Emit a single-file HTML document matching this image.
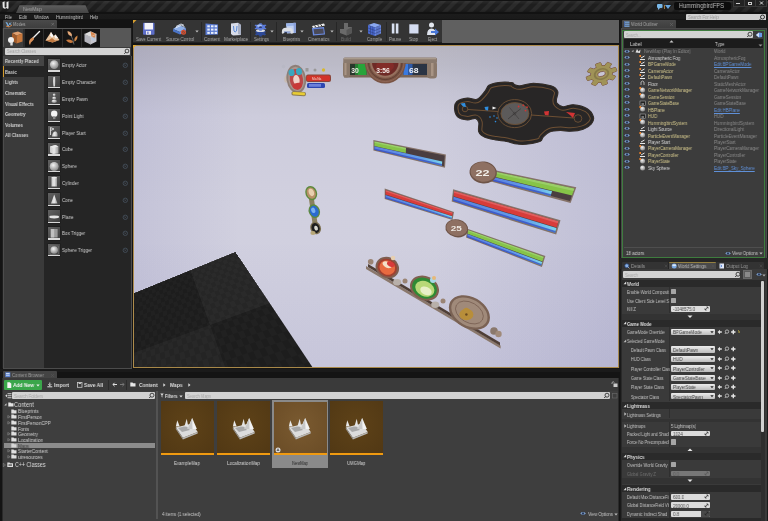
<!DOCTYPE html>
<html><head><meta charset="utf-8"><style>
*{margin:0;padding:0;box-sizing:border-box}
html,body{width:768px;height:521px;overflow:hidden;background:#141414;font-family:"Liberation Sans",sans-serif;color:#c8c8c8}
.a{position:absolute}
.t{position:absolute;white-space:nowrap;line-height:8px;height:8px;will-change:transform}
svg{position:absolute;overflow:visible}
</style></head><body>
<div class="a" style="left:0px;top:0px;width:768px;height:13px;background:linear-gradient(rgba(255,255,255,0.07),rgba(255,255,255,0) 35%,rgba(0,0,0,0) 70%,rgba(0,0,0,0.25)),repeating-linear-gradient(135deg,#1e1e1e 0 3.6px,#2b2b2b 4.8px 7.6px,#1e1e1e 8.8px)"></div>
<div class="a" style="left:0px;top:0px;width:768px;height:1px;background:#121212"></div>
<div class="a" style="left:0px;top:12px;width:768px;height:1.5px;background:#121212"></div>
<svg style="left:0;top:0" width="20" height="13"><path d="M2.5 2.2 L4.6 1.2 L4.6 7 Q5.5 8 6.5 7 L6.5 2.2 L8.5 1.3 L8.5 8.5 L7.3 8.8 L6.6 8 Q4 9.5 2.8 7.5 Z" fill="#e8e8e8"/></svg>
<svg style="left:0;top:0" width="100" height="13"><defs><linearGradient id="tabg" x1="0" y1="0" x2="0" y2="1"><stop offset="0" stop-color="#5e5e5e"/><stop offset="1" stop-color="#444"/></linearGradient></defs><polygon points="16,13 19.5,5.2 85.5,5.2 89,13" fill="url(#tabg)"/></svg>
<div class="t" style="left:22.5px;top:5px;font-size:5.5px;color:#a4a4a4;transform:scaleX(0.852);transform-origin:0 50%;">NewMap</div>
<svg style="left:650px;top:0" width="30" height="12"><rect x="7" y="4" width="5.5" height="4" rx="1" fill="#7ab8e8"/><path d="M8 8 L8 10 L10 8Z" fill="#7ab8e8"/><path d="M15 5 L21 5 L18 9Z" fill="#6aa8e0"/><rect x="14" y="5" width="1" height="4" fill="#a07a40"/></svg>
<div class="a" style="left:674px;top:2px;width:57px;height:7.5px;background:#0c0c0c;border-radius:2px"></div>
<div class="t" style="left:679px;top:2px;font-size:6.5px;color:#bdbdbd;transform:scaleX(0.877);transform-origin:0 50%;">HummingbirdFPS</div>
<div class="a" style="left:733px;top:0px;width:34px;height:6.5px;background:#222;border:1px solid #3a3a3a;border-top:none"></div>
<div class="a" style="left:744px;top:0px;width:1px;height:6.5px;background:#3a3a3a"></div>
<div class="a" style="left:755px;top:0px;width:1px;height:6.5px;background:#3a3a3a"></div>
<div class="a" style="left:736px;top:3px;width:4px;height:1px;background:#ccc"></div>
<div class="a" style="left:748px;top:1.5px;width:4px;height:3px;border:1px solid #ccc;border-top-width:1.5px"></div>
<svg style="left:756px;top:0" width="11" height="7"><path d="M4 1.5 L7 4.5 M7 1.5 L4 4.5" stroke="#ddd" stroke-width="1"/></svg>
<div class="a" style="left:0px;top:13.5px;width:768px;height:6.5px;background:linear-gradient(#1c1c1c,#1a1a1a 80%,#101010)"></div>
<div class="t" style="left:5px;top:12.8px;font-size:5.5px;color:#c4c4c4;transform:scaleX(0.790);transform-origin:0 50%;">File</div>
<div class="t" style="left:19px;top:12.8px;font-size:5.5px;color:#c4c4c4;transform:scaleX(0.844);transform-origin:0 50%;">Edit</div>
<div class="t" style="left:34px;top:12.8px;font-size:5.5px;color:#c4c4c4;transform:scaleX(0.767);transform-origin:0 50%;">Window</div>
<div class="t" style="left:56px;top:12.8px;font-size:5.5px;color:#c4c4c4;transform:scaleX(0.826);transform-origin:0 50%;">Hummingbird</div>
<div class="t" style="left:90px;top:12.8px;font-size:5.5px;color:#c4c4c4;transform:scaleX(0.707);transform-origin:0 50%;">Help</div>
<div class="a" style="left:686px;top:14px;width:80px;height:6.5px;background:#d0d0d0;border-radius:1px"></div>
<div class="t" style="left:687.5px;top:13.3px;font-size:5.2px;color:#9a9a9a;transform:scaleX(0.806);transform-origin:0 50%;">Search For Help</div>
<svg style="left:758px;top:14px" width="8" height="7"><circle cx="4.5" cy="3" r="2" stroke="#222" stroke-width="0.9" fill="none"/><path d="M3 4.5 L1.5 6" stroke="#222" stroke-width="1"/></svg>
<div class="a" style="left:3px;top:20px;width:54px;height:8px;background:linear-gradient(#4a4a4a,#3e3e3e);border-radius:1px 1px 0 0"></div>
<svg style="left:5px;top:21px" width="8" height="7"><path d="M1 1 L3 5 L6 1.5 M2 1.5 L3.5 6 M4 2 L6.5 4" stroke="#7ab0e0" stroke-width="0.9" fill="none"/><path d="M1 5 L4 6 L7 4" stroke="#d08040" stroke-width="1" fill="none"/></svg>
<div class="t" style="left:12.5px;top:20.2px;font-size:5.5px;color:#a8a8a8;transform:scaleX(0.745);transform-origin:0 50%;">Modes</div>
<svg style="left:50px;top:21px" width="6" height="6"><path d="M1.5 2 L4 4.5 M4 2 L1.5 4.5" stroke="#777" stroke-width="0.6"/></svg>
<div class="a" style="left:2px;top:28px;width:130px;height:340px;background:#3a3a3a;border-left:1px solid #1e1e1e;border-right:1px solid #1e1e1e;border-bottom:1px solid #1e1e1e"></div>
<div class="a" style="left:3px;top:28px;width:128px;height:19px;background:#575757"></div>
<div class="a" style="left:4px;top:29px;width:19px;height:17.5px;background:#3c3c3c"></div>
<div class="a" style="left:3.5px;top:28.5px;width:96px;height:18.5px;background:#2c2c2c"></div>
<div class="a" style="left:4px;top:29px;width:19px;height:17.5px;background:#3c3c3c"></div>
<div class="a" style="left:24.5px;top:29px;width:18px;height:17.5px;background:#141414"></div>
<div class="a" style="left:43.5px;top:29px;width:18px;height:17.5px;background:#141414"></div>
<div class="a" style="left:62.5px;top:29px;width:18px;height:17.5px;background:#141414"></div>
<div class="a" style="left:81.5px;top:29px;width:18px;height:17.5px;background:#141414"></div>
<svg style="left:4px;top:29px" width="20" height="18"><polygon points="8,4 14,2.5 18.5,4.5 12.5,6.5" fill="#e0a070"/><polygon points="8,4 12.5,6.5 12.5,14.5 8,12" fill="#a05a2a"/><polygon points="12.5,6.5 18.5,4.5 18.5,12.5 12.5,14.5" fill="#c8783c"/><circle cx="7" cy="11" r="3" fill="#f0f0f0"/><rect x="6.3" y="13" width="2.4" height="3.5" fill="#ddd"/></svg>
<svg style="left:24px;top:29px" width="19" height="18"><path d="M15.5 2.5 L8.5 9.5" stroke="#f4f4f4" stroke-width="1.4" stroke-linecap="round"/><path d="M9.2 8.3 Q5.5 9.5 5 13 Q4.8 15 6 16 Q6.5 13 8.5 12 Q10.5 10.5 10 9Z" fill="#d8905a"/></svg>
<svg style="left:43px;top:29px" width="19" height="18"><polygon points="2.5,11.5 8,3 10.5,7 12.5,5.5 16.5,11 9.5,13.5" fill="#e8c4a0"/><polygon points="2.5,11.5 9.5,13.5 16.5,11 12,11.5 9,9 6,11" fill="#c07840"/><polygon points="8,3 10.5,7 9,8.5 7,6.5" fill="#fafafa"/><polygon points="12.5,5.5 15,9 12.5,9.5 11.5,7.5" fill="#f4f4f4"/></svg>
<svg style="left:62px;top:29px" width="19" height="18"><path d="M5.5 2 Q10.5 3 10 7.5 Q5.5 6.5 5.5 2Z" fill="#e4a878"/><path d="M15.5 6.5 Q15.5 11.5 12.5 12.5 Q11.5 8.5 15.5 6.5Z" fill="#d08848"/><path d="M4 11 Q8.5 9.5 11.5 13 Q7 15.5 4 11Z" fill="#c87a40"/><path d="M9 6.5 Q11 10 12 15.5" stroke="#7a7a7a" stroke-width="0.8" fill="none"/></svg>
<svg style="left:81px;top:29px" width="19" height="18"><polygon points="3.5,5 9.5,2.2 15.5,5 9.5,8" fill="#dcdcdc"/><polygon points="3.5,5 9.5,8 9.5,15.5 3.5,12.5" fill="#b4b4bc"/><polygon points="9.5,8 15.5,5 15.5,12.5 9.5,15.5" fill="#c8c8d0"/><polygon points="9.5,2.5 14.5,4.8 14,9.5 10.5,7.5" fill="#d88850"/><polygon points="10,9 14,8 13.5,12 11,11" fill="#a8c8e8" opacity="0.6"/><path d="M3.5 5 L9.5 8 L15.5 5 M9.5 8 L9.5 15.5" stroke="#f0f0f0" stroke-width="0.4" fill="none"/></svg>
<div class="a" style="left:5px;top:48px;width:125px;height:6.5px;background:#d4d4d4;border-radius:1px"></div>
<div class="t" style="left:6.7px;top:47.4px;font-size:5.3px;color:#a4a4a4;transform:scaleX(0.781);transform-origin:0 50%;">Search Classes</div>
<svg style="left:123px;top:48px" width="7" height="7"><circle cx="4" cy="3" r="1.9" stroke="#222" stroke-width="0.8" fill="none"/><path d="M2.7 4.3 L1.3 5.8" stroke="#222" stroke-width="0.9"/></svg>
<div class="a" style="left:2.5px;top:55.5px;width:129px;height:313px;background:#3a3a3a;border:0.8px solid #4c4c4c"></div>
<div class="a" style="left:3.5px;top:55.8px;width:40.5px;height:10.6px;background:#454545"></div>
<div class="t" style="left:5.2px;top:57.199999999999996px;font-size:5.3px;color:#cfcfcf;transform:scaleX(0.83);transform-origin:0 50%;font-weight:bold">Recently Placed</div>
<div class="a" style="left:3.5px;top:66.39999999999999px;width:40.5px;height:10.4px;background:#252525"></div>
<div class="a" style="left:3px;top:66.39999999999999px;width:1.3px;height:10.4px;background:#d49a2a"></div>
<div class="t" style="left:5.2px;top:67.8px;font-size:5.3px;color:#cfcfcf;transform:scaleX(0.83);transform-origin:0 50%;font-weight:bold">Basic</div>
<div class="t" style="left:5.2px;top:78.4px;font-size:5.3px;color:#cfcfcf;transform:scaleX(0.83);transform-origin:0 50%;font-weight:bold">Lights</div>
<div class="t" style="left:5.2px;top:89.0px;font-size:5.3px;color:#cfcfcf;transform:scaleX(0.83);transform-origin:0 50%;font-weight:bold">Cinematic</div>
<div class="t" style="left:5.2px;top:99.6px;font-size:5.3px;color:#cfcfcf;transform:scaleX(0.83);transform-origin:0 50%;font-weight:bold">Visual Effects</div>
<div class="t" style="left:5.2px;top:110.2px;font-size:5.3px;color:#cfcfcf;transform:scaleX(0.83);transform-origin:0 50%;font-weight:bold">Geometry</div>
<div class="t" style="left:5.2px;top:120.8px;font-size:5.3px;color:#cfcfcf;transform:scaleX(0.83);transform-origin:0 50%;font-weight:bold">Volumes</div>
<div class="t" style="left:5.2px;top:131.4px;font-size:5.3px;color:#cfcfcf;transform:scaleX(0.83);transform-origin:0 50%;font-weight:bold">All Classes</div>
<div class="a" style="left:44.3px;top:56.3px;width:86.5px;height:311.5px;background:#252525"></div>
<svg style="left:0;top:0" width="1" height="1"><defs><radialGradient id="shs" cx="0.4" cy="0.35" r="0.65"><stop offset="0" stop-color="#f4f4f4"/><stop offset="1" stop-color="#8a8a8a"/></radialGradient><linearGradient id="shl" x1="0" x2="1"><stop offset="0" stop-color="#c8c8c8"/><stop offset="0.5" stop-color="#e8e8e8"/><stop offset="1" stop-color="#9a9a9a"/></linearGradient></defs></svg>
<div class="a" style="left:47.5px;top:58.8px;width:12.5px;height:12.8px;background:linear-gradient(135deg,#626262,#3c3c3c);box-shadow:0 0 0 0.5px #1a1a1a"></div>
<div class="a" style="left:47.5px;top:70.39999999999999px;width:12.5px;height:1.2px;background:#d8d8d8"></div>
<svg style="left:47.5px;top:58.8px" width="13" height="12"><circle cx="6.2" cy="5.6" r="4.3" fill="url(#shs)"/></svg>
<div class="t" style="left:62.2px;top:61.3px;font-size:5.3px;color:#cdcdcd;transform:scaleX(0.86);transform-origin:0 50%;">Empty Actor</div>
<svg style="left:122px;top:62.4px" width="7" height="7"><circle cx="3.3" cy="3.3" r="2.2" stroke="#46525e" stroke-width="0.8" fill="none"/><path d="M2.4 2.4 L4.2 4.2 M4.2 2.4 L2.4 4.2" stroke="#46525e" stroke-width="0.5"/></svg>
<div class="a" style="left:47.5px;top:75.6px;width:12.5px;height:12.8px;background:linear-gradient(135deg,#626262,#3c3c3c);box-shadow:0 0 0 0.5px #1a1a1a"></div>
<div class="a" style="left:47.5px;top:87.19999999999999px;width:12.5px;height:1.2px;background:#d8d8d8"></div>
<svg style="left:47.5px;top:75.6px" width="13" height="12"><path d="M5.3 1 Q6.2 0.3 7.1 1 L7.4 5 L7 10.5 L5.4 10.5 L5 5Z" fill="url(#shl)"/></svg>
<div class="t" style="left:62.2px;top:78.1px;font-size:5.3px;color:#cdcdcd;transform:scaleX(0.86);transform-origin:0 50%;">Empty Character</div>
<svg style="left:122px;top:79.19999999999999px" width="7" height="7"><circle cx="3.3" cy="3.3" r="2.2" stroke="#46525e" stroke-width="0.8" fill="none"/><path d="M2.4 2.4 L4.2 4.2 M4.2 2.4 L2.4 4.2" stroke="#46525e" stroke-width="0.5"/></svg>
<div class="a" style="left:47.5px;top:92.4px;width:12.5px;height:12.8px;background:linear-gradient(135deg,#626262,#3c3c3c);box-shadow:0 0 0 0.5px #1a1a1a"></div>
<div class="a" style="left:47.5px;top:104.0px;width:12.5px;height:1.2px;background:#d8d8d8"></div>
<svg style="left:47.5px;top:92.4px" width="13" height="12"><circle cx="6.2" cy="2.8" r="1.4" fill="url(#shs)"/><ellipse cx="6.2" cy="6" rx="2" ry="1.6" fill="url(#shs)"/><ellipse cx="6.2" cy="9.2" rx="2.7" ry="1.7" fill="url(#shs)"/></svg>
<div class="t" style="left:62.2px;top:94.9px;font-size:5.3px;color:#cdcdcd;transform:scaleX(0.86);transform-origin:0 50%;">Empty Pawn</div>
<svg style="left:122px;top:96.0px" width="7" height="7"><circle cx="3.3" cy="3.3" r="2.2" stroke="#46525e" stroke-width="0.8" fill="none"/><path d="M2.4 2.4 L4.2 4.2 M4.2 2.4 L2.4 4.2" stroke="#46525e" stroke-width="0.5"/></svg>
<div class="a" style="left:47.5px;top:109.2px;width:12.5px;height:12.8px;background:linear-gradient(135deg,#626262,#3c3c3c);box-shadow:0 0 0 0.5px #1a1a1a"></div>
<div class="a" style="left:47.5px;top:120.8px;width:12.5px;height:1.2px;background:#d8d8d8"></div>
<svg style="left:47.5px;top:109.2px" width="13" height="12"><circle cx="6.2" cy="4.8" r="3.2" fill="#f6f6f6"/><rect x="5" y="7.3" width="2.4" height="2.8" fill="#8a8a8a"/></svg>
<div class="t" style="left:62.2px;top:111.7px;font-size:5.3px;color:#cdcdcd;transform:scaleX(0.86);transform-origin:0 50%;">Point Light</div>
<svg style="left:122px;top:112.8px" width="7" height="7"><circle cx="3.3" cy="3.3" r="2.2" stroke="#46525e" stroke-width="0.8" fill="none"/><path d="M2.4 2.4 L4.2 4.2 M4.2 2.4 L2.4 4.2" stroke="#46525e" stroke-width="0.5"/></svg>
<div class="a" style="left:47.5px;top:126.0px;width:12.5px;height:12.8px;background:linear-gradient(135deg,#626262,#3c3c3c);box-shadow:0 0 0 0.5px #1a1a1a"></div>
<div class="a" style="left:47.5px;top:137.6px;width:12.5px;height:1.2px;background:#d8d8d8"></div>
<svg style="left:47.5px;top:126.0px" width="13" height="12"><path d="M2.5 1.5 L2.5 9 M2.5 1.5 L6 3 L2.5 4.5" stroke="#ddd" stroke-width="0.9" fill="none"/><path d="M4 10.5 Q4.5 5 8 5.5 Q10 6.5 9.5 10.5Z" fill="url(#shl)"/></svg>
<div class="t" style="left:62.2px;top:128.5px;font-size:5.3px;color:#cdcdcd;transform:scaleX(0.86);transform-origin:0 50%;">Player Start</div>
<svg style="left:122px;top:129.6px" width="7" height="7"><circle cx="3.3" cy="3.3" r="2.2" stroke="#46525e" stroke-width="0.8" fill="none"/><path d="M2.4 2.4 L4.2 4.2 M4.2 2.4 L2.4 4.2" stroke="#46525e" stroke-width="0.5"/></svg>
<div class="a" style="left:47.5px;top:142.8px;width:12.5px;height:12.8px;background:linear-gradient(135deg,#626262,#3c3c3c);box-shadow:0 0 0 0.5px #1a1a1a"></div>
<div class="a" style="left:47.5px;top:154.4px;width:12.5px;height:1.2px;background:#d8d8d8"></div>
<svg style="left:47.5px;top:142.8px" width="13" height="12"><polygon points="2,3.5 7.5,2 10.5,3.5 10.5,10.5 5,11 2,9.5" fill="url(#shl)"/><polygon points="2,3.5 7.5,2 10.5,3.5 5,5" fill="#e8e8e8"/></svg>
<div class="t" style="left:62.2px;top:145.3px;font-size:5.3px;color:#cdcdcd;transform:scaleX(0.86);transform-origin:0 50%;">Cube</div>
<svg style="left:122px;top:146.4px" width="7" height="7"><circle cx="3.3" cy="3.3" r="2.2" stroke="#46525e" stroke-width="0.8" fill="none"/><path d="M2.4 2.4 L4.2 4.2 M4.2 2.4 L2.4 4.2" stroke="#46525e" stroke-width="0.5"/></svg>
<div class="a" style="left:47.5px;top:159.60000000000002px;width:12.5px;height:12.8px;background:linear-gradient(135deg,#626262,#3c3c3c);box-shadow:0 0 0 0.5px #1a1a1a"></div>
<div class="a" style="left:47.5px;top:171.20000000000002px;width:12.5px;height:1.2px;background:#d8d8d8"></div>
<svg style="left:47.5px;top:159.60000000000002px" width="13" height="12"><circle cx="6.2" cy="6.5" r="4.5" fill="url(#shs)"/></svg>
<div class="t" style="left:62.2px;top:162.10000000000002px;font-size:5.3px;color:#cdcdcd;transform:scaleX(0.86);transform-origin:0 50%;">Sphere</div>
<svg style="left:122px;top:163.20000000000002px" width="7" height="7"><circle cx="3.3" cy="3.3" r="2.2" stroke="#46525e" stroke-width="0.8" fill="none"/><path d="M2.4 2.4 L4.2 4.2 M4.2 2.4 L2.4 4.2" stroke="#46525e" stroke-width="0.5"/></svg>
<div class="a" style="left:47.5px;top:176.4px;width:12.5px;height:12.8px;background:linear-gradient(135deg,#626262,#3c3c3c);box-shadow:0 0 0 0.5px #1a1a1a"></div>
<div class="a" style="left:47.5px;top:188.0px;width:12.5px;height:1.2px;background:#d8d8d8"></div>
<svg style="left:47.5px;top:176.4px" width="13" height="12"><rect x="3.5" y="1.5" width="5.5" height="9" fill="url(#shl)"/><ellipse cx="6.2" cy="1.6" rx="2.8" ry="0.9" fill="#e8e8e8"/></svg>
<div class="t" style="left:62.2px;top:178.9px;font-size:5.3px;color:#cdcdcd;transform:scaleX(0.86);transform-origin:0 50%;">Cylinder</div>
<svg style="left:122px;top:180.0px" width="7" height="7"><circle cx="3.3" cy="3.3" r="2.2" stroke="#46525e" stroke-width="0.8" fill="none"/><path d="M2.4 2.4 L4.2 4.2 M4.2 2.4 L2.4 4.2" stroke="#46525e" stroke-width="0.5"/></svg>
<div class="a" style="left:47.5px;top:193.2px;width:12.5px;height:12.8px;background:linear-gradient(135deg,#626262,#3c3c3c);box-shadow:0 0 0 0.5px #1a1a1a"></div>
<div class="a" style="left:47.5px;top:204.79999999999998px;width:12.5px;height:1.2px;background:#d8d8d8"></div>
<svg style="left:47.5px;top:193.2px" width="13" height="12"><polygon points="6.2,1.5 9.5,10.5 3,10.5" fill="url(#shl)"/></svg>
<div class="t" style="left:62.2px;top:195.7px;font-size:5.3px;color:#cdcdcd;transform:scaleX(0.86);transform-origin:0 50%;">Cone</div>
<svg style="left:122px;top:196.79999999999998px" width="7" height="7"><circle cx="3.3" cy="3.3" r="2.2" stroke="#46525e" stroke-width="0.8" fill="none"/><path d="M2.4 2.4 L4.2 4.2 M4.2 2.4 L2.4 4.2" stroke="#46525e" stroke-width="0.5"/></svg>
<div class="a" style="left:47.5px;top:210.0px;width:12.5px;height:12.8px;background:linear-gradient(135deg,#626262,#3c3c3c);box-shadow:0 0 0 0.5px #1a1a1a"></div>
<div class="a" style="left:47.5px;top:221.6px;width:12.5px;height:1.2px;background:#d8d8d8"></div>
<svg style="left:47.5px;top:210.0px" width="13" height="12"><ellipse cx="6.2" cy="7" rx="5" ry="1.4" fill="#e4e4e4"/></svg>
<div class="t" style="left:62.2px;top:212.5px;font-size:5.3px;color:#cdcdcd;transform:scaleX(0.86);transform-origin:0 50%;">Plane</div>
<svg style="left:122px;top:213.6px" width="7" height="7"><circle cx="3.3" cy="3.3" r="2.2" stroke="#46525e" stroke-width="0.8" fill="none"/><path d="M2.4 2.4 L4.2 4.2 M4.2 2.4 L2.4 4.2" stroke="#46525e" stroke-width="0.5"/></svg>
<div class="a" style="left:47.5px;top:226.8px;width:12.5px;height:12.8px;background:linear-gradient(135deg,#626262,#3c3c3c);box-shadow:0 0 0 0.5px #1a1a1a"></div>
<div class="a" style="left:47.5px;top:238.4px;width:12.5px;height:1.2px;background:#d8d8d8"></div>
<svg style="left:47.5px;top:226.8px" width="13" height="12"><rect x="2.8" y="2" width="6.8" height="8.5" fill="#9a9a9a"/><rect x="2.8" y="2" width="3.4" height="8.5" fill="#c0c0c0"/></svg>
<div class="t" style="left:62.2px;top:229.3px;font-size:5.3px;color:#cdcdcd;transform:scaleX(0.86);transform-origin:0 50%;">Box Trigger</div>
<svg style="left:122px;top:230.4px" width="7" height="7"><circle cx="3.3" cy="3.3" r="2.2" stroke="#46525e" stroke-width="0.8" fill="none"/><path d="M2.4 2.4 L4.2 4.2 M4.2 2.4 L2.4 4.2" stroke="#46525e" stroke-width="0.5"/></svg>
<div class="a" style="left:47.5px;top:243.60000000000002px;width:12.5px;height:12.8px;background:linear-gradient(135deg,#626262,#3c3c3c);box-shadow:0 0 0 0.5px #1a1a1a"></div>
<div class="a" style="left:47.5px;top:255.20000000000002px;width:12.5px;height:1.2px;background:#d8d8d8"></div>
<svg style="left:47.5px;top:243.60000000000002px" width="13" height="12"><circle cx="6.2" cy="6" r="3.8" fill="url(#shs)"/><rect x="2" y="2" width="8.5" height="8.5" fill="none" stroke="#888" stroke-width="0.4"/></svg>
<div class="t" style="left:62.2px;top:246.10000000000002px;font-size:5.3px;color:#cdcdcd;transform:scaleX(0.86);transform-origin:0 50%;">Sphere Trigger</div>
<svg style="left:122px;top:247.20000000000002px" width="7" height="7"><circle cx="3.3" cy="3.3" r="2.2" stroke="#46525e" stroke-width="0.8" fill="none"/><path d="M2.4 2.4 L4.2 4.2 M4.2 2.4 L2.4 4.2" stroke="#46525e" stroke-width="0.5"/></svg>
<div class="a" style="left:133px;top:20px;width:486px;height:22.6px;background:#606060"></div>
<div class="a" style="left:133px;top:20px;width:309px;height:22.5px;background:#343434;border-bottom:1px solid #222"></div>
<svg style="left:133px;top:20px" width="4" height="4"><polygon points="0,0 3.5,0 0,3.5" fill="#d8a030"/></svg>
<div class="a" style="left:201.2px;top:22px;width:0.8px;height:19px;background:#262626"></div>
<div class="a" style="left:250px;top:22px;width:0.8px;height:19px;background:#262626"></div>
<div class="a" style="left:276px;top:22px;width:0.8px;height:19px;background:#262626"></div>
<div class="a" style="left:336.4px;top:22px;width:0.8px;height:19px;background:#262626"></div>
<div class="a" style="left:385.8px;top:22px;width:0.8px;height:19px;background:#262626"></div>
<div class="t" style="left:136px;top:34.9px;font-size:5px;color:#a9a9a9;transform:scaleX(0.849);transform-origin:0 50%;">Save Current</div>
<div class="t" style="left:165.8px;top:34.9px;font-size:5px;color:#a9a9a9;transform:scaleX(0.846);transform-origin:0 50%;">Source Control</div>
<div class="t" style="left:204px;top:34.9px;font-size:5px;color:#a9a9a9;transform:scaleX(0.914);transform-origin:0 50%;">Content</div>
<div class="t" style="left:224px;top:34.9px;font-size:5px;color:#a9a9a9;transform:scaleX(0.881);transform-origin:0 50%;">Marketplace</div>
<div class="t" style="left:254px;top:34.9px;font-size:5px;color:#a9a9a9;transform:scaleX(0.830);transform-origin:0 50%;">Settings</div>
<div class="t" style="left:283px;top:34.9px;font-size:5px;color:#a9a9a9;transform:scaleX(0.765);transform-origin:0 50%;">Blueprints</div>
<div class="t" style="left:307.7px;top:34.9px;font-size:5px;color:#a9a9a9;transform:scaleX(0.861);transform-origin:0 50%;">Cinematics</div>
<div class="t" style="left:341px;top:34.9px;font-size:5px;color:#6a6a6a;transform:scaleX(0.899);transform-origin:0 50%;">Build</div>
<div class="t" style="left:366.8px;top:34.9px;font-size:5px;color:#a9a9a9;transform:scaleX(0.829);transform-origin:0 50%;">Compile</div>
<div class="t" style="left:388.8px;top:34.9px;font-size:5px;color:#a9a9a9;transform:scaleX(0.861);transform-origin:0 50%;">Pause</div>
<div class="t" style="left:409px;top:34.9px;font-size:5px;color:#a9a9a9;transform:scaleX(0.875);transform-origin:0 50%;">Stop</div>
<div class="t" style="left:427.7px;top:34.9px;font-size:5px;color:#a9a9a9;transform:scaleX(0.810);transform-origin:0 50%;">Eject</div>
<svg style="left:194.5px;top:30px" width="4" height="3"><polygon points="0.3,0.5 3.7,0.5 2,2.5" fill="#bbb"/></svg>
<svg style="left:269.8px;top:30px" width="4" height="3"><polygon points="0.3,0.5 3.7,0.5 2,2.5" fill="#bbb"/></svg>
<svg style="left:299.5px;top:30px" width="4" height="3"><polygon points="0.3,0.5 3.7,0.5 2,2.5" fill="#bbb"/></svg>
<svg style="left:330px;top:30px" width="4" height="3"><polygon points="0.3,0.5 3.7,0.5 2,2.5" fill="#bbb"/></svg>
<svg style="left:358.6px;top:30px" width="4" height="3"><polygon points="0.3,0.5 3.7,0.5 2,2.5" fill="#bbb"/></svg>
<svg style="left:142px;top:22px" width="14" height="14"><rect x="1" y="0.8" width="11.5" height="12" rx="0.8" fill="#5d6ec8"/><rect x="2.5" y="1" width="8.5" height="6.5" fill="#f4f4fa"/><rect x="4" y="9" width="5" height="3.6" fill="#e8e8f0"/><rect x="5.3" y="9.6" width="1.2" height="2.4" fill="#5d6ec8"/></svg>
<svg style="left:172px;top:22px" width="16" height="14"><polygon points="1,7 7,3 14,6 8,10" fill="#8fb0e8"/><polygon points="1,7 8,10 8,12.5 1,9.5" fill="#4a74c8"/><polygon points="8,10 14,6 14,8.5 8,12.5" fill="#6a8ed8"/><path d="M4 4.5 L9 2 L12 3.3 M3.5 6 L9.5 3.2 L12.5 4.6" stroke="#e4ecf8" stroke-width="0.9" fill="none"/><circle cx="11.5" cy="10.3" r="2.5" fill="#e05030"/><circle cx="11.5" cy="10.3" r="1.5" fill="#8a4a3a"/><path d="M10.3 11.5 L12.7 9.1" stroke="#e05030" stroke-width="0.8"/></svg>
<svg style="left:204px;top:22px" width="16" height="14"><polygon points="1.5,1.5 14,2.5 14,12.5 1.5,13" fill="#5a7ad0"/><g fill="#e8eefa"><rect x="3.3" y="3.3" width="2.5" height="2"/><rect x="7" y="3.3" width="2.5" height="2"/><rect x="10.6" y="3.3" width="2.5" height="2"/><rect x="3.3" y="6.6" width="2.5" height="2"/><rect x="7" y="6.6" width="2.5" height="2"/><rect x="10.6" y="6.6" width="2.5" height="2"/><rect x="3.3" y="9.9" width="2.5" height="2"/><rect x="7" y="9.9" width="2.5" height="2"/><rect x="10.6" y="9.9" width="2.5" height="2"/></g></svg>
<svg style="left:230px;top:22px" width="12" height="14"><polygon points="1,1.5 8,0.8 11,3 11,13 3,13.5 1,12" fill="#d8dce8"/><polygon points="8,0.8 11,3 11,13 8,12" fill="#a8b0c4"/><path d="M3.5 4 L4 9 Q5 11 6.5 9 L7 4" stroke="#5a8ad8" stroke-width="1" fill="none"/></svg>
<svg style="left:254px;top:21.5px" width="14" height="15"><g transform="translate(6.5,11) scale(1,0.6)" fill="#2e4a98"><circle r="4.2"/><rect x="-1.3" y="-5.800000000000001" width="2.6" height="2.4" transform="rotate(0)"/><rect x="-1.3" y="-5.800000000000001" width="2.6" height="2.4" transform="rotate(60)"/><rect x="-1.3" y="-5.800000000000001" width="2.6" height="2.4" transform="rotate(120)"/><rect x="-1.3" y="-5.800000000000001" width="2.6" height="2.4" transform="rotate(180)"/><rect x="-1.3" y="-5.800000000000001" width="2.6" height="2.4" transform="rotate(240)"/><rect x="-1.3" y="-5.800000000000001" width="2.6" height="2.4" transform="rotate(300)"/></g><ellipse cx="6.5" cy="8.5" rx="4.5" ry="1.6" fill="#d8dce4"/><g transform="translate(6.5,5) scale(1,0.6)" fill="#5a7ad8"><circle r="4.6"/><rect x="-1.3" y="-6.199999999999999" width="2.6" height="2.4" transform="rotate(0)"/><rect x="-1.3" y="-6.199999999999999" width="2.6" height="2.4" transform="rotate(60)"/><rect x="-1.3" y="-6.199999999999999" width="2.6" height="2.4" transform="rotate(120)"/><rect x="-1.3" y="-6.199999999999999" width="2.6" height="2.4" transform="rotate(180)"/><rect x="-1.3" y="-6.199999999999999" width="2.6" height="2.4" transform="rotate(240)"/><rect x="-1.3" y="-6.199999999999999" width="2.6" height="2.4" transform="rotate(300)"/></g><ellipse cx="5.5" cy="3.8" rx="2.5" ry="1.3" fill="#a8c0f0"/><ellipse cx="6.5" cy="5.2" rx="1.5" ry="0.9" fill="#2a3a70"/></svg>
<svg style="left:281px;top:21.5px" width="16" height="14"><polygon points="5,1.5 14.5,0.8 15,11 6,11.5" fill="#c0d0f0"/><polygon points="5,1.5 14.5,0.8 14.5,3.5 5,4.2" fill="#9ab4e8"/><polygon points="12.5,1 15,1 15,11 13,11" fill="#8aa0d8"/><path d="M1 8.5 Q1.5 5.8 4.5 5.8 L8.5 5.8 Q11.5 5.8 11.8 8.5 L12 11 Q11 12.3 9.5 11 L8.5 10 L4 10 L3 11 Q1.3 12.3 0.8 11Z" fill="#dcdfe4"/><path d="M3 10 L9.5 10" stroke="#3a5ab0" stroke-width="0.7"/></svg>
<svg style="left:311px;top:22px" width="15" height="14"><polygon points="1,4 13,1.5 14,3.5 2,6" fill="#f0f0f0"/><path d="M3.5 3.5 L5 5.5 M6.5 2.8 L8 4.8 M9.5 2.2 L11 4.2" stroke="#333" stroke-width="1"/><polygon points="1,6 13,5 14,12.5 2,13.5" fill="#6a8ae0"/><polygon points="2.5,7.2 12.3,6.5 12.9,11.4 3.3,12.2" fill="#4a4a58"/></svg>
<svg style="left:339px;top:22px" width="15" height="14"><polygon points="5,1 9,1 9,5 13,5 13,11 7.5,13.5 1,11 1,7 5,7" fill="#6a6a6a"/><polygon points="7.5,8 13,5 13,11 7.5,13.5" fill="#565656"/></svg>
<svg style="left:367px;top:21.5px" width="15" height="15"><polygon points="1,3 7,1 14,3 8,5.5" fill="#8aa8f0"/><polygon points="1,3 8,5.5 8,14 1,11.5" fill="#4a6ad0"/><polygon points="8,5.5 14,3 14,11.5 8,14" fill="#6a88e0"/><path d="M1 6 L8 8.5 L14 6 M1 9 L8 11.5 L14 9 M3.5 4 L3.5 12.5 M5.8 4.8 L5.8 13.2 M10 4.6 L10 13.2 M12 3.8 L12 12.4" stroke="#2a3a78" stroke-width="0.5" fill="none"/></svg>
<svg style="left:391px;top:23px" width="9" height="12"><rect x="0.8" y="0.5" width="2.6" height="10" fill="#d8e0f0"/><rect x="4.8" y="0.5" width="2.6" height="10" fill="#d8e0f0"/></svg>
<svg style="left:408.5px;top:23.5px" width="10" height="10"><rect x="0.3" y="0.3" width="9.2" height="9.2" fill="#d4dcf0"/></svg>
<svg style="left:426px;top:22px" width="14" height="15"><circle cx="5.5" cy="3" r="2.5" fill="#e4e8f0"/><path d="M1 13 Q1 6.5 5.5 6.5 Q10 6.5 10 13Z" fill="#dfe4ee"/><polygon points="5,9 9,9 9,6.5 13,10 9,13.5 9,11 5,11" fill="#4a78d8"/></svg>
<div class="a" style="left:133px;top:45px;width:486px;height:323px;background:linear-gradient(90deg,rgba(40,40,130,0.08),rgba(40,40,130,0) 22%,rgba(40,40,130,0) 62%,rgba(40,40,130,0.10)),linear-gradient(rgba(0,0,0,0) 60%,rgba(40,40,130,0.05)),linear-gradient(#b8b6c1,#bcbbc8 6%,#c6c5d4 14%,#cdccdc 22%,#d1d0df 50%,#cfcedf);border-top:1px solid #ae8c4c;border-left:1px solid #ae8c4c;border-right:1.2px solid #a88a50"></div>
<svg style="left:133px;top:45px" width="4" height="4"><polygon points="0,0 3.5,0 0,3.5" fill="#e0a830"/></svg>
<div class="a" style="left:619px;top:45px;width:2px;height:323px;background:#1e1e1e"></div>
<div class="a" style="left:0;top:0;width:768px;height:521px;clip-path:polygon(134px 293px,235.5px 251.8px,313px 368px,134px 368px)"><div class="a" style="left:0;top:0;width:400px;height:220px;transform-origin:0 0;transform:matrix3d(0.35112674027844337,-0.23508444551128257,0,-0.0002645223235717748,-0.2739876620259233,-0.19785715314450228,0,-0.0021639702352376326,0,0,1,0,69.95246279404721,319.1910897743639,0,1.0);background:#1d1d1d"><div class="a" style="left:300px;top:0;width:100px;height:100px;background:#262626"></div><div class="a" style="left:0;top:100px;width:300px;height:120px;background:#242424"></div><div class="a" style="left:0;top:0;width:400px;height:220px;background:repeating-conic-gradient(rgba(255,255,255,0.02) 0 25%,rgba(0,0,0,0) 0 50%) 0 0/16px 16px"></div></div></div>
<div class="a" style="left:133px;top:367.3px;width:486px;height:1.2px;background:#a88848"></div>
<svg style="left:0;top:0" width="768" height="521">
<defs><pattern id="chk" width="8" height="8" patternUnits="userSpaceOnUse" patternTransform="matrix(0.928,-0.373,0.548,0.836,236,252)"><rect width="8" height="8" fill="#222222"/><rect width="4" height="4" fill="#272727"/><rect x="4" y="4" width="4" height="4" fill="#272727"/></pattern><pattern id="zone" width="104" height="116" patternUnits="userSpaceOnUse" patternTransform="matrix(0.928,-0.373,0.548,0.836,236,252)"><rect width="104" height="116" fill="#000" opacity="0"/><rect x="0" y="0" width="52" height="58" fill="#000" opacity="0.22"/><rect x="52" y="58" width="52" height="58" fill="#000" opacity="0.22"/></pattern><linearGradient id="blue" x1="0" x2="1"><stop offset="0" stop-color="#5a80e0"/><stop offset="0.7" stop-color="#62a0ea"/><stop offset="1" stop-color="#7ad4ec"/></linearGradient><radialGradient id="rdc" cx="0.5" cy="0.5" r="0.5"><stop offset="0.5" stop-color="#6a2a28"/><stop offset="1" stop-color="#8a5040"/></radialGradient></defs>
<defs><clipPath id="mapclip"><path d="M454.7,108.9 C454.5,106.3 454.9,103.3 457.0,101.5 C459.1,99.7 464.2,98.5 467.5,98.2 C470.8,97.9 474.0,100.6 476.9,99.5 C479.8,98.4 483.0,93.8 485.0,91.4 C487.0,89.1 486.8,86.9 489.0,85.4 C491.2,84.0 494.6,83.2 498.4,82.7 C502.2,82.2 509.1,82.4 511.8,82.7 C514.5,83.0 513.1,84.2 514.5,84.7 C515.9,85.2 516.9,86.2 520.0,86.0 C523.1,85.8 528.2,83.4 533.4,83.4 C538.5,83.4 546.9,84.7 550.9,86.0 C554.9,87.3 556.7,89.2 557.6,91.4 C558.5,93.7 556.4,97.5 556.3,99.5 C556.2,101.5 555.9,102.3 557.0,103.5 C558.1,104.7 560.2,106.7 563.0,106.9 C565.8,107.1 569.8,104.6 573.8,104.9 C577.8,105.2 584.0,106.9 587.2,108.9 C590.5,110.9 592.6,114.5 593.3,117.0 C594.0,119.5 593.0,121.7 591.3,123.7 C589.6,125.7 586.6,127.8 583.2,129.0 C579.8,130.2 574.9,130.9 571.1,131.1 C567.3,131.3 563.9,130.3 560.3,130.4 C556.7,130.5 552.5,130.7 549.6,131.8 C546.7,132.9 544.5,135.6 542.9,137.2 C541.3,138.8 542.7,140.1 540.2,141.2 C537.7,142.3 531.8,143.4 528.0,143.9 C524.2,144.4 520.8,144.4 517.2,143.9 C513.6,143.4 510.1,141.9 506.5,141.2 C502.9,140.5 499.3,140.5 495.7,139.8 C492.1,139.1 487.8,138.5 485.0,137.2 C482.2,135.9 479.9,134.3 478.9,131.8 C477.9,129.3 479.5,124.7 478.9,122.4 C478.3,120.2 477.4,118.8 475.5,118.3 C473.6,117.8 470.4,119.9 467.5,119.7 C464.6,119.5 460.1,118.8 458.0,117.0 C455.9,115.2 454.9,111.5 454.7,108.9 Z"/></clipPath></defs>
<path d="M454.7,108.9 C454.5,106.3 454.9,103.3 457.0,101.5 C459.1,99.7 464.2,98.5 467.5,98.2 C470.8,97.9 474.0,100.6 476.9,99.5 C479.8,98.4 483.0,93.8 485.0,91.4 C487.0,89.1 486.8,86.9 489.0,85.4 C491.2,84.0 494.6,83.2 498.4,82.7 C502.2,82.2 509.1,82.4 511.8,82.7 C514.5,83.0 513.1,84.2 514.5,84.7 C515.9,85.2 516.9,86.2 520.0,86.0 C523.1,85.8 528.2,83.4 533.4,83.4 C538.5,83.4 546.9,84.7 550.9,86.0 C554.9,87.3 556.7,89.2 557.6,91.4 C558.5,93.7 556.4,97.5 556.3,99.5 C556.2,101.5 555.9,102.3 557.0,103.5 C558.1,104.7 560.2,106.7 563.0,106.9 C565.8,107.1 569.8,104.6 573.8,104.9 C577.8,105.2 584.0,106.9 587.2,108.9 C590.5,110.9 592.6,114.5 593.3,117.0 C594.0,119.5 593.0,121.7 591.3,123.7 C589.6,125.7 586.6,127.8 583.2,129.0 C579.8,130.2 574.9,130.9 571.1,131.1 C567.3,131.3 563.9,130.3 560.3,130.4 C556.7,130.5 552.5,130.7 549.6,131.8 C546.7,132.9 544.5,135.6 542.9,137.2 C541.3,138.8 542.7,140.1 540.2,141.2 C537.7,142.3 531.8,143.4 528.0,143.9 C524.2,144.4 520.8,144.4 517.2,143.9 C513.6,143.4 510.1,141.9 506.5,141.2 C502.9,140.5 499.3,140.5 495.7,139.8 C492.1,139.1 487.8,138.5 485.0,137.2 C482.2,135.9 479.9,134.3 478.9,131.8 C477.9,129.3 479.5,124.7 478.9,122.4 C478.3,120.2 477.4,118.8 475.5,118.3 C473.6,117.8 470.4,119.9 467.5,119.7 C464.6,119.5 460.1,118.8 458.0,117.0 C455.9,115.2 454.9,111.5 454.7,108.9 Z" fill="#282626" stroke="#282626" stroke-width="1.4"/>
<g clip-path="url(#mapclip)"><path d="M454.7,108.9 C454.5,106.3 454.9,103.3 457.0,101.5 C459.1,99.7 464.2,98.5 467.5,98.2 C470.8,97.9 474.0,100.6 476.9,99.5 C479.8,98.4 483.0,93.8 485.0,91.4 C487.0,89.1 486.8,86.9 489.0,85.4 C491.2,84.0 494.6,83.2 498.4,82.7 C502.2,82.2 509.1,82.4 511.8,82.7 C514.5,83.0 513.1,84.2 514.5,84.7 C515.9,85.2 516.9,86.2 520.0,86.0 C523.1,85.8 528.2,83.4 533.4,83.4 C538.5,83.4 546.9,84.7 550.9,86.0 C554.9,87.3 556.7,89.2 557.6,91.4 C558.5,93.7 556.4,97.5 556.3,99.5 C556.2,101.5 555.9,102.3 557.0,103.5 C558.1,104.7 560.2,106.7 563.0,106.9 C565.8,107.1 569.8,104.6 573.8,104.9 C577.8,105.2 584.0,106.9 587.2,108.9 C590.5,110.9 592.6,114.5 593.3,117.0 C594.0,119.5 593.0,121.7 591.3,123.7 C589.6,125.7 586.6,127.8 583.2,129.0 C579.8,130.2 574.9,130.9 571.1,131.1 C567.3,131.3 563.9,130.3 560.3,130.4 C556.7,130.5 552.5,130.7 549.6,131.8 C546.7,132.9 544.5,135.6 542.9,137.2 C541.3,138.8 542.7,140.1 540.2,141.2 C537.7,142.3 531.8,143.4 528.0,143.9 C524.2,144.4 520.8,144.4 517.2,143.9 C513.6,143.4 510.1,141.9 506.5,141.2 C502.9,140.5 499.3,140.5 495.7,139.8 C492.1,139.1 487.8,138.5 485.0,137.2 C482.2,135.9 479.9,134.3 478.9,131.8 C477.9,129.3 479.5,124.7 478.9,122.4 C478.3,120.2 477.4,118.8 475.5,118.3 C473.6,117.8 470.4,119.9 467.5,119.7 C464.6,119.5 460.1,118.8 458.0,117.0 C455.9,115.2 454.9,111.5 454.7,108.9 Z" fill="none" stroke="#6e5034" stroke-width="7.6"/><path d="M454.7,108.9 C454.5,106.3 454.9,103.3 457.0,101.5 C459.1,99.7 464.2,98.5 467.5,98.2 C470.8,97.9 474.0,100.6 476.9,99.5 C479.8,98.4 483.0,93.8 485.0,91.4 C487.0,89.1 486.8,86.9 489.0,85.4 C491.2,84.0 494.6,83.2 498.4,82.7 C502.2,82.2 509.1,82.4 511.8,82.7 C514.5,83.0 513.1,84.2 514.5,84.7 C515.9,85.2 516.9,86.2 520.0,86.0 C523.1,85.8 528.2,83.4 533.4,83.4 C538.5,83.4 546.9,84.7 550.9,86.0 C554.9,87.3 556.7,89.2 557.6,91.4 C558.5,93.7 556.4,97.5 556.3,99.5 C556.2,101.5 555.9,102.3 557.0,103.5 C558.1,104.7 560.2,106.7 563.0,106.9 C565.8,107.1 569.8,104.6 573.8,104.9 C577.8,105.2 584.0,106.9 587.2,108.9 C590.5,110.9 592.6,114.5 593.3,117.0 C594.0,119.5 593.0,121.7 591.3,123.7 C589.6,125.7 586.6,127.8 583.2,129.0 C579.8,130.2 574.9,130.9 571.1,131.1 C567.3,131.3 563.9,130.3 560.3,130.4 C556.7,130.5 552.5,130.7 549.6,131.8 C546.7,132.9 544.5,135.6 542.9,137.2 C541.3,138.8 542.7,140.1 540.2,141.2 C537.7,142.3 531.8,143.4 528.0,143.9 C524.2,144.4 520.8,144.4 517.2,143.9 C513.6,143.4 510.1,141.9 506.5,141.2 C502.9,140.5 499.3,140.5 495.7,139.8 C492.1,139.1 487.8,138.5 485.0,137.2 C482.2,135.9 479.9,134.3 478.9,131.8 C477.9,129.3 479.5,124.7 478.9,122.4 C478.3,120.2 477.4,118.8 475.5,118.3 C473.6,117.8 470.4,119.9 467.5,119.7 C464.6,119.5 460.1,118.8 458.0,117.0 C455.9,115.2 454.9,111.5 454.7,108.9 Z" fill="none" stroke="#282626" stroke-width="5.6"/></g>
<path d="M468 109.5 L498 111.5 M531 115 L574 118" stroke="#6e5034" stroke-width="1.1" fill="none"/>
<circle cx="465" cy="109" r="2.8" fill="none" stroke="#6e5034" stroke-width="0.9"/><circle cx="578" cy="118.5" r="3.8" fill="none" stroke="#6e5034" stroke-width="0.9"/>
<ellipse cx="514.7" cy="113.6" rx="17" ry="14" fill="none" stroke="#6e5034" stroke-width="0.9"/>
<ellipse cx="514.9" cy="113.6" rx="14" ry="11" fill="#5c5a5a" stroke="#6e5034" stroke-width="0.9"/><path d="M508 119 L514.5 113.6 L521 108.5 M514.5 113.6 L519 119 M509.5 107.5 L514.5 113.6" stroke="#3a3838" stroke-width="0.6"/><circle cx="514.5" cy="113.6" r="1.3" fill="none" stroke="#3a3838" stroke-width="0.5"/>
<g fill="#2f8ee0"><path d="M460.5 103.5 L465 103 L466 107 L463 106.5Z"/><path d="M484.5 107 L488.5 106.5 L488 110.5 L485.5 110Z"/><circle cx="490" cy="117" r="0.8"/><circle cx="494" cy="116" r="0.8"/><circle cx="497" cy="118" r="0.8"/><circle cx="495.5" cy="121.6" r="0.8"/></g>
<polygon points="492.5,106.5 496.5,108 492.5,109.5" fill="#f0f0f0"/>
<g fill="#d23434"><circle cx="518.6" cy="106.5" r="0.9"/><circle cx="523.3" cy="105.3" r="0.9"/><circle cx="527" cy="107.2" r="0.9"/><circle cx="525.5" cy="110.6" r="0.9"/><path d="M544 111.5 L549 111 L548.5 115.5 L545 115Z"/><path d="M566 112 L575 113 L573 118 L570 115Z"/></g>
<g transform="translate(601.5,74) rotate(-18) scale(1,0.72)"><g fill="#a09358" stroke="#6e3e30" stroke-width="0.9"><rect x="-2.8" y="-15.5" width="5.6" height="6" rx="0.8" transform="rotate(0)"/><rect x="-2.8" y="-15.5" width="5.6" height="6" rx="0.8" transform="rotate(45)"/><rect x="-2.8" y="-15.5" width="5.6" height="6" rx="0.8" transform="rotate(90)"/><rect x="-2.8" y="-15.5" width="5.6" height="6" rx="0.8" transform="rotate(135)"/><rect x="-2.8" y="-15.5" width="5.6" height="6" rx="0.8" transform="rotate(180)"/><rect x="-2.8" y="-15.5" width="5.6" height="6" rx="0.8" transform="rotate(225)"/><rect x="-2.8" y="-15.5" width="5.6" height="6" rx="0.8" transform="rotate(270)"/><rect x="-2.8" y="-15.5" width="5.6" height="6" rx="0.8" transform="rotate(315)"/><circle r="11.2"/></g><g fill="#a09358"><rect x="-2.8" y="-15.5" width="5.6" height="6" rx="0.8" transform="rotate(0)"/><rect x="-2.8" y="-15.5" width="5.6" height="6" rx="0.8" transform="rotate(45)"/><rect x="-2.8" y="-15.5" width="5.6" height="6" rx="0.8" transform="rotate(90)"/><rect x="-2.8" y="-15.5" width="5.6" height="6" rx="0.8" transform="rotate(135)"/><rect x="-2.8" y="-15.5" width="5.6" height="6" rx="0.8" transform="rotate(180)"/><rect x="-2.8" y="-15.5" width="5.6" height="6" rx="0.8" transform="rotate(225)"/><rect x="-2.8" y="-15.5" width="5.6" height="6" rx="0.8" transform="rotate(270)"/><rect x="-2.8" y="-15.5" width="5.6" height="6" rx="0.8" transform="rotate(315)"/></g><circle r="11" fill="#a09358"/><circle r="7" fill="none" stroke="#877a48" stroke-width="2"/><ellipse rx="4" ry="3.3" fill="#c8c6d6" stroke="#6e3e30" stroke-width="0.7"/></g>
<circle cx="283.5" cy="66.5" r="1.8" fill="#b8b8c4"/>
<ellipse cx="286.5" cy="79.2" rx="2.3" ry="3.6" fill="#c8bcb4"/>
<rect x="306" y="74.5" width="25" height="7.5" rx="2" fill="#8a4438"/><rect x="306.5" y="75.5" width="23.5" height="5.5" rx="1.5" fill="#d2342a"/>
<rect x="307" y="83" width="18" height="5" rx="1.5" fill="#2d46b0"/><rect x="309" y="84" width="12" height="2.8" fill="#6c80d8"/>
<text x="312" y="80" font-size="3.2" fill="#f4dcd4" font-family="Liberation Sans">Ma  Na</text>
<g transform="rotate(-8 296.3 79)"><ellipse cx="296.3" cy="79" rx="9.8" ry="14.2" fill="#8e7e76"/><ellipse cx="296.3" cy="79" rx="8" ry="12.2" fill="#a89890"/><ellipse cx="296.3" cy="79.5" rx="6.6" ry="10.6" fill="#b8484a"/><ellipse cx="292.5" cy="72" rx="3" ry="3.5" fill="#3aa6c0"/><ellipse cx="300" cy="72" rx="3" ry="3.5" fill="#3aa6c0"/><ellipse cx="296.3" cy="80" rx="3.2" ry="5" fill="#f0d0c8"/><ellipse cx="296.3" cy="86" rx="4.5" ry="3" fill="#c83838"/></g>
<rect x="291.5" y="91.5" width="14.5" height="4.3" rx="1.8" fill="#8a7a50" transform="rotate(4 298 93)"/><rect x="292.5" y="92.2" width="12.5" height="2.7" rx="1" fill="#e8cc34" transform="rotate(4 298 93)"/>
<g fill="#9a9898"><rect x="305.5" y="68" width="3" height="3.5"/><circle cx="315" cy="70" r="1.5"/></g><circle cx="323.5" cy="70" r="1.7" fill="#d8b830"/>
<rect x="344" y="62" width="88" height="15.5" fill="#7a6658"/>
<rect x="349" y="64" width="17.5" height="11" fill="#27392c"/><rect x="358" y="64" width="8.5" height="11" fill="#27a43a"/><rect x="355" y="64" width="3" height="11" fill="#287a34"/>
<rect x="403.5" y="64" width="23.5" height="11" fill="#2a3444"/><rect x="403.5" y="64" width="5" height="11" fill="#3a7ae0"/><rect x="408.5" y="64" width="4" height="11" fill="#2e5aa8"/>
<path d="M364.7 62 A20.5 21.5 0 0 0 405.8 62 Z" fill="#7a5444"/>
<path d="M366.5 62 A18.7 19.5 0 0 0 404 62" fill="none" stroke="#9a7262" stroke-width="0.6"/><path d="M368.5 62 A16.7 17.5 0 0 0 402 62" fill="none" stroke="#5a3a30" stroke-width="0.8"/>
<path d="M370 62 A15 15.5 0 0 0 400.5 62 Z" fill="#96705e"/><path d="M372 62 A13 13.5 0 0 0 398.5 62 Z" fill="#6e2a26"/>
<ellipse cx="385" cy="66" rx="9" ry="6" fill="#8a2e2a" opacity="0.7"/>
<rect x="343" y="61" width="7" height="16.5" rx="3" fill="#8a786a"/><rect x="344.5" y="63" width="2" height="12" fill="#a89484"/>
<rect x="427" y="61" width="10" height="17.5" rx="3.5" fill="#8a786a"/><rect x="431" y="63" width="2.5" height="13" fill="#a89484"/>
<rect x="343.3" y="57.6" width="93.7" height="5.3" rx="1.5" fill="#8a7a6e"/><rect x="344" y="57.8" width="92" height="1.5" fill="#a89a8c"/>
<text x="351.2" y="72.6" font-size="7.6" font-weight="bold" fill="#ecece4" font-family="Liberation Sans" textLength="7.5" lengthAdjust="spacingAndGlyphs">30</text>
<text x="376.3" y="72.6" font-size="7.6" font-weight="bold" fill="#f4ece8" font-family="Liberation Sans" textLength="13.5" lengthAdjust="spacingAndGlyphs">3:56</text>
<text x="409" y="72.6" font-size="7.6" font-weight="bold" fill="#eef2f8" font-family="Liberation Sans" textLength="9.5" lengthAdjust="spacingAndGlyphs">68</text>
<polygon points="373.4,140.0 445.9,154.4 445.0,167.8 373.4,150.6" fill="#857268"/><polygon points="374.3,141.2 444.7,155.5 444.0,166.2 374.3,149.7" fill="#4a3e40"/><polygon points="374.3,141.2 406.0,147.7 405.8,152.9 374.3,145.9" fill="#86c448"/><polygon points="374.3,141.2 406.0,147.7 405.9,149.4 374.3,142.8" fill="#fff" opacity="0.18"/><polygon points="374.3,146.3 442.2,161.5 441.9,165.7 374.3,149.7" fill="url(#blue)"/><polygon points="374.3,148.4 442.0,164.1 441.9,165.7 374.3,149.7" fill="#3448c0" opacity="0.75"/>
<polygon points="494.0,170.1 576.3,187.3 570.6,203.0 491.0,181.6" fill="#857268"/><polygon points="494.7,171.5 574.5,188.6 570.0,201.1 492.3,180.7" fill="#4a3e40"/><polygon points="494.7,171.5 574.5,188.6 572.0,195.5 493.4,176.5" fill="#86c448"/><polygon points="494.7,171.5 574.5,188.6 573.7,190.9 494.2,173.1" fill="#fff" opacity="0.18"/><polygon points="493.2,177.0 552.1,191.3 550.5,196.0 492.3,180.7" fill="url(#blue)"/><polygon points="492.6,179.3 551.2,194.2 550.5,196.0 492.3,180.7" fill="#3448c0" opacity="0.75"/>
<polygon points="384.7,188.6 454.0,212.1 452.5,219.9 384.7,199.0" fill="#857268"/><polygon points="385.5,189.9 452.8,212.5 451.6,218.8 385.5,198.2" fill="#4a3e40"/><polygon points="385.5,189.9 452.8,212.5 452.2,216.0 385.5,194.5" fill="#d83c3a"/><polygon points="385.5,189.9 452.8,212.5 452.6,213.7 385.5,191.4" fill="#fff" opacity="0.18"/><polygon points="385.5,194.9 452.1,216.3 451.6,218.8 385.5,198.2" fill="url(#blue)"/><polygon points="385.5,197.0 451.8,217.8 451.6,218.8 385.5,198.2" fill="#3448c0" opacity="0.75"/>
<polygon points="453.1,189.3 560.5,220.3 556.2,234.6 451.7,201.6" fill="#857268"/><polygon points="454.2,190.9 558.5,221.3 555.1,232.7 453.1,200.8" fill="#4a3e40"/><polygon points="454.2,190.9 558.5,221.3 556.6,227.5 453.6,196.3" fill="#d83c3a"/><polygon points="454.2,190.9 558.5,221.3 557.9,223.3 454.0,192.7" fill="#fff" opacity="0.18"/><polygon points="453.6,196.8 556.4,228.1 555.1,232.7 453.1,200.8" fill="url(#blue)"/><polygon points="453.3,199.3 555.6,230.9 555.1,232.7 453.1,200.8" fill="#3448c0" opacity="0.75"/>
<polygon points="467.4,228.8 545.4,256.0 541.9,267.0 466.0,237.4" fill="#857268"/><polygon points="468.2,230.0 543.9,256.7 541.1,265.5 467.1,236.9" fill="#4a3e40"/><polygon points="468.2,230.0 543.9,256.7 542.4,261.5 467.6,233.8" fill="#86c448"/><polygon points="468.2,230.0 543.9,256.7 543.4,258.3 468.0,231.2" fill="#fff" opacity="0.18"/><polygon points="467.5,234.1 542.2,262.0 541.1,265.5 467.1,236.9" fill="url(#blue)"/><polygon points="467.2,235.8 541.5,264.1 541.1,265.5 467.1,236.9" fill="#3448c0" opacity="0.75"/>
<ellipse cx="483.2" cy="172.4" rx="13.7" ry="10.9" fill="#6e5448" transform="rotate(8 483.2 172.4)"/><ellipse cx="483" cy="172" rx="12.5" ry="9.8" fill="#8e7062" transform="rotate(8 483.2 172.4)"/>
<text x="475.5" y="175.6" font-size="8.6" font-weight="bold" fill="#f2eee8" font-family="Liberation Sans" textLength="14" lengthAdjust="spacingAndGlyphs">22</text>
<ellipse cx="456.8" cy="228.3" rx="11.5" ry="9" fill="#6e5448" transform="rotate(12 456.8 228.3)"/><ellipse cx="456.6" cy="228" rx="10.5" ry="8" fill="#8e7062" transform="rotate(12 456.8 228.3)"/>
<text x="450.8" y="231" font-size="7" font-weight="bold" fill="#ece6e0" font-family="Liberation Sans" textLength="11" lengthAdjust="spacingAndGlyphs">25</text>
<path d="M311 196 L316 230" stroke="#8a8060" stroke-width="5" stroke-linecap="round"/>
<g transform="rotate(-20 311.2 193.1)"><ellipse cx="311.2" cy="193.1" rx="5.8" ry="7.3" fill="#5e8a3e"/><ellipse cx="311.2" cy="193.1" rx="4.4" ry="5.8" fill="#b89068"/><ellipse cx="311.6" cy="192.5" rx="2.6" ry="3.8" fill="#e8d0b0"/></g>
<g transform="rotate(-20 314.3 211.2)"><ellipse cx="314.3" cy="211.2" rx="5.6" ry="7" fill="#5e8a3e"/><ellipse cx="314.3" cy="211.2" rx="4.3" ry="5.6" fill="#2a6ad0"/><ellipse cx="313.6" cy="210" rx="2" ry="2.8" fill="#7ab0f0"/></g>
<g transform="rotate(-20 315.6 228)"><ellipse cx="315.6" cy="228" rx="5.3" ry="6.3" fill="#7a6e50"/><ellipse cx="315.6" cy="228" rx="4" ry="5" fill="#1e1e1e"/><ellipse cx="316" cy="228.3" rx="1.8" ry="2.5" fill="#d8d8d0"/></g>
<ellipse cx="313" cy="233" rx="2.6" ry="2" fill="#b8a878"/>
<polygon points="366,266 500.6,345.5 500.6,348.5 366,269" fill="#8a786c"/>
<polygon points="368,264 500,342.5 500,345.5 368,267" fill="#4e3e36"/>
<circle cx="370.7" cy="261.7" r="2.8" fill="#9a8474"/>
<g transform="rotate(25 387.3 267.6)"><ellipse cx="387.3" cy="267.6" rx="12" ry="10.5" fill="#7e5e50"/><ellipse cx="387.3" cy="267.6" rx="10" ry="8.7" fill="#a04030"/><ellipse cx="387.3" cy="267.6" rx="8" ry="7" fill="#e86a40"/><ellipse cx="386" cy="265" rx="5" ry="3" fill="#f4e0c8"/><ellipse cx="389" cy="263" rx="4" ry="2.5" fill="#d83a3a"/></g>
<circle cx="393" cy="258" r="2.2" fill="#e8d0b0"/>
<ellipse cx="397.1" cy="282.2" rx="4" ry="3.2" fill="#b8b0aa"/><circle cx="405" cy="281" r="2.5" fill="#9a8474"/>
<g transform="rotate(25 424.5 288.1)"><ellipse cx="424.5" cy="288.1" rx="15" ry="12" fill="#806050"/><ellipse cx="424.5" cy="288.1" rx="12.8" ry="10" fill="#2e8a34"/><ellipse cx="425" cy="288.5" rx="10" ry="7.5" fill="#b8d878"/><ellipse cx="427" cy="290" rx="6" ry="4" fill="#e8f0c8"/></g>
<circle cx="433" cy="280" r="3" fill="#a8d8e8"/><circle cx="434" cy="278" r="2" fill="#e8b878"/>
<ellipse cx="435.2" cy="304.7" rx="4" ry="3.2" fill="#b8b0aa"/><circle cx="443" cy="301" r="2.5" fill="#9a8474"/>
<g transform="rotate(30 469.4 312.5)"><ellipse cx="469.4" cy="312.5" rx="22" ry="15.5" fill="#7a6254"/><ellipse cx="469.4" cy="312.5" rx="19.5" ry="13.2" fill="#a08a7a"/><ellipse cx="469.4" cy="312.5" rx="15" ry="10" fill="none" stroke="#7a6254" stroke-width="0.8"/></g>
<ellipse cx="466.4" cy="314.5" rx="7" ry="5.8" fill="#b88e3a"/><path d="M463 311 Q466 306 469.5 310.5" stroke="#b88e3a" stroke-width="1.3" fill="none"/><circle cx="466.4" cy="314.5" r="1.2" fill="#6a4a20"/>
<circle cx="494" cy="331" r="3.8" fill="#8a786c"/><circle cx="498.5" cy="334" r="3.2" fill="#a08a7a"/>
</svg>
<div class="a" style="left:620px;top:20px;width:148px;height:501px;background:#1a1a1a"></div>
<div class="a" style="left:622.3px;top:20.3px;width:53.4px;height:7.8px;background:linear-gradient(#4a4a4a,#3e3e3e);border-radius:1px 1px 0 0"></div>
<svg style="left:623.5px;top:21px" width="6" height="7"><g fill="#7aa8e0"><rect x="0" y="0.5" width="5.5" height="1.3"/><rect x="0" y="2.5" width="5.5" height="1.3"/><rect x="0" y="4.5" width="5.5" height="1.3"/></g><rect x="0" y="0.5" width="1" height="5.3" fill="#4a6aa8"/></svg>
<div class="t" style="left:631.3px;top:20.4px;font-size:5px;color:#a4a4a4;transform:scaleX(0.838);transform-origin:0 50%;">World Outliner</div>
<svg style="left:669px;top:22px" width="5" height="5"><path d="M1 1 L4 4 M4 1 L1 4" stroke="#666" stroke-width="0.6"/></svg>
<div class="a" style="left:620.5px;top:28px;width:146px;height:232px;background:#3c3c3c;border:1px solid #4a4a4a"></div>
<div class="a" style="left:622.3px;top:29.5px;width:142.3px;height:228.6px;background:#3c3c3c;border:1.4px solid #3e7c3e"></div>
<div class="a" style="left:624px;top:31.3px;width:129px;height:6.5px;background:#d2d2d2;border-radius:1px"></div>
<div class="t" style="left:625.5px;top:30.700000000000003px;font-size:5px;color:#a8a8a8;transform:scaleX(0.750);transform-origin:0 50%;">Search...</div>
<svg style="left:746px;top:31px" width="7" height="7"><circle cx="4" cy="3.2" r="2" stroke="#222" stroke-width="0.8" fill="none"/><path d="M2.6 4.6 L1.2 6" stroke="#222" stroke-width="0.9"/></svg>
<svg style="left:755px;top:32px" width="8" height="6"><polygon points="1,3 4,0.5 7,1 7,5 4,5.5" fill="#6a9ae8"/><polygon points="1,3 4,0.5 4,5.5" fill="#cfe0f8"/></svg>
<div class="a" style="left:623.5px;top:38.8px;width:139px;height:9px;background:#1c1c1c"></div>
<div class="t" style="left:629.7px;top:39.5px;font-size:5.2px;color:#cfcfcf;transform:scaleX(0.904);transform-origin:0 50%;">Label</div>
<div class="t" style="left:714.5px;top:39.5px;font-size:5.2px;color:#cfcfcf;transform:scaleX(0.843);transform-origin:0 50%;">Type</div>
<svg style="left:669px;top:39.5px" width="5" height="3"><polygon points="2.5,0.3 4.5,2.5 0.5,2.5" fill="#ccc"/></svg>
<svg style="left:757.5px;top:44px" width="5" height="3"><polygon points="0.5,0.5 4.5,0.5 2.5,2.5" fill="#999"/></svg>
<svg style="left:623.8px;top:48.6px" width="7" height="5"><path d="M0.3 2.5 Q3 -0.3 5.8 2.5 Q3 5.3 0.3 2.5Z" fill="#8ab0e0"/><circle cx="3" cy="2.5" r="1.2" fill="#2a3a5a"/></svg>
<svg style="left:630px;top:48.1px" width="12" height="6"><polygon points="1.5,3.8 3.5,1.8 3.5,3.8" fill="#bbb"/><path d="M5.5 4.5 L7 1 L8.5 3.5 L10.5 1.5 L10 5 Z" fill="#ddd"/></svg>
<div class="t" style="left:643.5px;top:47.4px;font-size:5px;color:#8a8a8a;transform:scaleX(0.86);transform-origin:0 50%;">NewMap (Play In Editor)</div>
<div class="t" style="left:713.5px;top:47.4px;font-size:5px;color:#8a8a8a;transform:scaleX(0.87);transform-origin:0 50%;">World</div>
<svg style="left:623.8px;top:55.07px" width="7" height="5"><path d="M0.3 2.5 Q3 -0.3 5.8 2.5 Q3 5.3 0.3 2.5Z" fill="#8ab0e0"/><circle cx="3" cy="2.5" r="1.2" fill="#2a3a5a"/></svg>
<svg style="left:639px;top:54.57px" width="8" height="6"><path d="M1 4.5 L6 4.5 M2 3 L5.5 1" stroke="#e8e8e8" stroke-width="1"/><circle cx="1.2" cy="1" r="1" fill="#ff8a2a"/></svg>
<div class="t" style="left:648px;top:53.87px;font-size:5px;color:#d8d8d8;transform:scaleX(0.85);transform-origin:0 50%;">Atmospheric Fog</div>
<div class="t" style="left:713.5px;top:53.87px;font-size:5px;color:#8a8a8a;transform:scaleX(0.87);transform-origin:0 50%;">AtmosphericFog</div>
<svg style="left:623.8px;top:61.540000000000006px" width="7" height="5"><path d="M0.3 2.5 Q3 -0.3 5.8 2.5 Q3 5.3 0.3 2.5Z" fill="#8ab0e0"/><circle cx="3" cy="2.5" r="1.2" fill="#2a3a5a"/></svg>
<svg style="left:639px;top:61.040000000000006px" width="8" height="6"><path d="M1 4.5 L6 4.5 M2 3 L5.5 1" stroke="#e8e8e8" stroke-width="1"/><circle cx="1.2" cy="1" r="1" fill="#ff8a2a"/></svg>
<div class="t" style="left:648px;top:60.34px;font-size:5px;color:#d2c68c;transform:scaleX(0.85);transform-origin:0 50%;">BPGameMode</div>
<div class="t" style="left:713.5px;top:60.34px;font-size:5px;color:#5f90d8;transform:scaleX(0.87);transform-origin:0 50%;text-decoration:underline;">Edit BPGameMode</div>
<svg style="left:623.8px;top:68.01px" width="7" height="5"><path d="M0.3 2.5 Q3 -0.3 5.8 2.5 Q3 5.3 0.3 2.5Z" fill="#8ab0e0"/><circle cx="3" cy="2.5" r="1.2" fill="#2a3a5a"/></svg>
<svg style="left:639px;top:67.51px" width="8" height="6"><path d="M1 4.5 L6 4.5 M2 3 L5.5 1" stroke="#e8e8e8" stroke-width="1"/><circle cx="1.2" cy="1" r="1" fill="#ff8a2a"/></svg>
<div class="t" style="left:648px;top:66.81px;font-size:5px;color:#d2c68c;transform:scaleX(0.85);transform-origin:0 50%;">CameraActor</div>
<div class="t" style="left:713.5px;top:66.81px;font-size:5px;color:#8a8a8a;transform:scaleX(0.87);transform-origin:0 50%;">CameraActor</div>
<svg style="left:623.8px;top:74.48px" width="7" height="5"><path d="M0.3 2.5 Q3 -0.3 5.8 2.5 Q3 5.3 0.3 2.5Z" fill="#8ab0e0"/><circle cx="3" cy="2.5" r="1.2" fill="#2a3a5a"/></svg>
<svg style="left:639px;top:73.98px" width="8" height="6"><path d="M1 4.5 L6 4.5 M2 3 L5.5 1" stroke="#e8e8e8" stroke-width="1"/><circle cx="1.2" cy="1" r="1" fill="#ff8a2a"/></svg>
<div class="t" style="left:648px;top:73.28px;font-size:5px;color:#d2c68c;transform:scaleX(0.85);transform-origin:0 50%;">DefaultPawn</div>
<div class="t" style="left:713.5px;top:73.28px;font-size:5px;color:#8a8a8a;transform:scaleX(0.87);transform-origin:0 50%;">DefaultPawn</div>
<svg style="left:623.8px;top:80.95px" width="7" height="5"><path d="M0.3 2.5 Q3 -0.3 5.8 2.5 Q3 5.3 0.3 2.5Z" fill="#8ab0e0"/><circle cx="3" cy="2.5" r="1.2" fill="#2a3a5a"/></svg>
<svg style="left:639px;top:80.45px" width="8" height="6"><path d="M2 5 L2 2 Q3.5 0 5 2 L5 5" stroke="#ccc" stroke-width="0.8" fill="none"/></svg>
<div class="t" style="left:648px;top:79.75px;font-size:5px;color:#d8d8d8;transform:scaleX(0.85);transform-origin:0 50%;">Floor</div>
<div class="t" style="left:713.5px;top:79.75px;font-size:5px;color:#8a8a8a;transform:scaleX(0.87);transform-origin:0 50%;">StaticMeshActor</div>
<svg style="left:623.8px;top:87.42px" width="7" height="5"><path d="M0.3 2.5 Q3 -0.3 5.8 2.5 Q3 5.3 0.3 2.5Z" fill="#8ab0e0"/><circle cx="3" cy="2.5" r="1.2" fill="#2a3a5a"/></svg>
<svg style="left:639px;top:86.92px" width="8" height="6"><circle cx="3.6" cy="3" r="2.5" fill="url(#shs)"/><circle cx="1.2" cy="1" r="1" fill="#ff8a2a"/></svg>
<div class="t" style="left:648px;top:86.22px;font-size:5px;color:#d2c68c;transform:scaleX(0.85);transform-origin:0 50%;">GameNetworkManager</div>
<div class="t" style="left:713.5px;top:86.22px;font-size:5px;color:#8a8a8a;transform:scaleX(0.87);transform-origin:0 50%;">GameNetworkManager</div>
<svg style="left:623.8px;top:93.89px" width="7" height="5"><path d="M0.3 2.5 Q3 -0.3 5.8 2.5 Q3 5.3 0.3 2.5Z" fill="#8ab0e0"/><circle cx="3" cy="2.5" r="1.2" fill="#2a3a5a"/></svg>
<svg style="left:639px;top:93.39px" width="8" height="6"><circle cx="3.6" cy="3" r="2.5" fill="url(#shs)"/><circle cx="1.2" cy="1" r="1" fill="#ff8a2a"/></svg>
<div class="t" style="left:648px;top:92.69px;font-size:5px;color:#d2c68c;transform:scaleX(0.85);transform-origin:0 50%;">GameSession</div>
<div class="t" style="left:713.5px;top:92.69px;font-size:5px;color:#8a8a8a;transform:scaleX(0.87);transform-origin:0 50%;">GameSession</div>
<svg style="left:623.8px;top:100.36px" width="7" height="5"><path d="M0.3 2.5 Q3 -0.3 5.8 2.5 Q3 5.3 0.3 2.5Z" fill="#8ab0e0"/><circle cx="3" cy="2.5" r="1.2" fill="#2a3a5a"/></svg>
<svg style="left:639px;top:99.86px" width="8" height="6"><rect x="1" y="1" width="5.5" height="4.5" fill="#222" stroke="#bbb" stroke-width="0.5"/><rect x="2.5" y="3.5" width="2.5" height="1" fill="#ccc"/></svg>
<div class="t" style="left:648px;top:99.16px;font-size:5px;color:#d2c68c;transform:scaleX(0.85);transform-origin:0 50%;">GameStateBase</div>
<div class="t" style="left:713.5px;top:99.16px;font-size:5px;color:#8a8a8a;transform:scaleX(0.87);transform-origin:0 50%;">GameStateBase</div>
<svg style="left:623.8px;top:106.83px" width="7" height="5"><path d="M0.3 2.5 Q3 -0.3 5.8 2.5 Q3 5.3 0.3 2.5Z" fill="#8ab0e0"/><circle cx="3" cy="2.5" r="1.2" fill="#2a3a5a"/></svg>
<svg style="left:639px;top:106.33px" width="8" height="6"><circle cx="3.6" cy="3" r="2.5" fill="url(#shs)"/><circle cx="1.2" cy="1" r="1" fill="#ff8a2a"/></svg>
<div class="t" style="left:648px;top:105.63px;font-size:5px;color:#d2c68c;transform:scaleX(0.85);transform-origin:0 50%;">HBPlane</div>
<div class="t" style="left:713.5px;top:105.63px;font-size:5px;color:#5f90d8;transform:scaleX(0.87);transform-origin:0 50%;text-decoration:underline;">Edit HBPlane</div>
<svg style="left:623.8px;top:113.30000000000001px" width="7" height="5"><path d="M0.3 2.5 Q3 -0.3 5.8 2.5 Q3 5.3 0.3 2.5Z" fill="#8ab0e0"/><circle cx="3" cy="2.5" r="1.2" fill="#2a3a5a"/></svg>
<svg style="left:639px;top:112.80000000000001px" width="8" height="6"><rect x="1" y="1" width="5.5" height="4.5" fill="#222" stroke="#bbb" stroke-width="0.5"/><rect x="2.5" y="3.5" width="2.5" height="1" fill="#ccc"/></svg>
<div class="t" style="left:648px;top:112.10000000000001px;font-size:5px;color:#d2c68c;transform:scaleX(0.85);transform-origin:0 50%;">HUD</div>
<div class="t" style="left:713.5px;top:112.10000000000001px;font-size:5px;color:#8a8a8a;transform:scaleX(0.87);transform-origin:0 50%;">HUD</div>
<svg style="left:623.8px;top:119.77000000000001px" width="7" height="5"><path d="M0.3 2.5 Q3 -0.3 5.8 2.5 Q3 5.3 0.3 2.5Z" fill="#8ab0e0"/><circle cx="3" cy="2.5" r="1.2" fill="#2a3a5a"/></svg>
<svg style="left:639px;top:119.27000000000001px" width="8" height="6"><circle cx="3.6" cy="3" r="2.5" fill="url(#shs)"/><circle cx="1.2" cy="1" r="1" fill="#ff8a2a"/></svg>
<div class="t" style="left:648px;top:118.57000000000001px;font-size:5px;color:#d2c68c;transform:scaleX(0.85);transform-origin:0 50%;">HummingbirdSystem</div>
<div class="t" style="left:713.5px;top:118.57000000000001px;font-size:5px;color:#8a8a8a;transform:scaleX(0.87);transform-origin:0 50%;">HummingbirdSystem</div>
<svg style="left:623.8px;top:126.24000000000001px" width="7" height="5"><path d="M0.3 2.5 Q3 -0.3 5.8 2.5 Q3 5.3 0.3 2.5Z" fill="#8ab0e0"/><circle cx="3" cy="2.5" r="1.2" fill="#2a3a5a"/></svg>
<svg style="left:639px;top:125.74000000000001px" width="8" height="6"><path d="M1 4.5 L6 4.5 M2 3 L5.5 1" stroke="#e8e8e8" stroke-width="1"/></svg>
<div class="t" style="left:648px;top:125.04000000000002px;font-size:5px;color:#d8d8d8;transform:scaleX(0.85);transform-origin:0 50%;">Light Source</div>
<div class="t" style="left:713.5px;top:125.04000000000002px;font-size:5px;color:#8a8a8a;transform:scaleX(0.87);transform-origin:0 50%;">DirectionalLight</div>
<svg style="left:623.8px;top:132.71px" width="7" height="5"><path d="M0.3 2.5 Q3 -0.3 5.8 2.5 Q3 5.3 0.3 2.5Z" fill="#8ab0e0"/><circle cx="3" cy="2.5" r="1.2" fill="#2a3a5a"/></svg>
<svg style="left:639px;top:132.21px" width="8" height="6"><circle cx="3.6" cy="3" r="2.5" fill="url(#shs)"/><circle cx="1.2" cy="1" r="1" fill="#ff8a2a"/></svg>
<div class="t" style="left:648px;top:131.51000000000002px;font-size:5px;color:#d2c68c;transform:scaleX(0.85);transform-origin:0 50%;">ParticleEventManager</div>
<div class="t" style="left:713.5px;top:131.51000000000002px;font-size:5px;color:#8a8a8a;transform:scaleX(0.87);transform-origin:0 50%;">ParticleEventManager</div>
<svg style="left:623.8px;top:139.18px" width="7" height="5"><path d="M0.3 2.5 Q3 -0.3 5.8 2.5 Q3 5.3 0.3 2.5Z" fill="#8ab0e0"/><circle cx="3" cy="2.5" r="1.2" fill="#2a3a5a"/></svg>
<svg style="left:639px;top:138.68px" width="8" height="6"><path d="M1 4.5 L6 4.5 M2 3 L5.5 1" stroke="#e8e8e8" stroke-width="1"/></svg>
<div class="t" style="left:648px;top:137.98000000000002px;font-size:5px;color:#d8d8d8;transform:scaleX(0.85);transform-origin:0 50%;">Player Start</div>
<div class="t" style="left:713.5px;top:137.98000000000002px;font-size:5px;color:#8a8a8a;transform:scaleX(0.87);transform-origin:0 50%;">PlayerStart</div>
<svg style="left:623.8px;top:145.65px" width="7" height="5"><path d="M0.3 2.5 Q3 -0.3 5.8 2.5 Q3 5.3 0.3 2.5Z" fill="#8ab0e0"/><circle cx="3" cy="2.5" r="1.2" fill="#2a3a5a"/></svg>
<svg style="left:639px;top:145.15px" width="8" height="6"><circle cx="3.6" cy="3" r="2.5" fill="url(#shs)"/><circle cx="1.2" cy="1" r="1" fill="#ff8a2a"/></svg>
<div class="t" style="left:648px;top:144.45000000000002px;font-size:5px;color:#d2c68c;transform:scaleX(0.85);transform-origin:0 50%;">PlayerCameraManager</div>
<div class="t" style="left:713.5px;top:144.45000000000002px;font-size:5px;color:#8a8a8a;transform:scaleX(0.87);transform-origin:0 50%;">PlayerCameraManager</div>
<svg style="left:623.8px;top:152.12px" width="7" height="5"><path d="M0.3 2.5 Q3 -0.3 5.8 2.5 Q3 5.3 0.3 2.5Z" fill="#8ab0e0"/><circle cx="3" cy="2.5" r="1.2" fill="#2a3a5a"/></svg>
<svg style="left:639px;top:151.62px" width="8" height="6"><path d="M1 4.5 L6 4.5 M2 3 L5.5 1" stroke="#e8e8e8" stroke-width="1"/><circle cx="1.2" cy="1" r="1" fill="#ff8a2a"/></svg>
<div class="t" style="left:648px;top:150.92000000000002px;font-size:5px;color:#d2c68c;transform:scaleX(0.85);transform-origin:0 50%;">PlayerController</div>
<div class="t" style="left:713.5px;top:150.92000000000002px;font-size:5px;color:#8a8a8a;transform:scaleX(0.87);transform-origin:0 50%;">PlayerController</div>
<svg style="left:623.8px;top:158.59px" width="7" height="5"><path d="M0.3 2.5 Q3 -0.3 5.8 2.5 Q3 5.3 0.3 2.5Z" fill="#8ab0e0"/><circle cx="3" cy="2.5" r="1.2" fill="#2a3a5a"/></svg>
<svg style="left:639px;top:158.09px" width="8" height="6"><circle cx="3.6" cy="3" r="2.5" fill="url(#shs)"/><circle cx="1.2" cy="1" r="1" fill="#ff8a2a"/></svg>
<div class="t" style="left:648px;top:157.39000000000001px;font-size:5px;color:#d2c68c;transform:scaleX(0.85);transform-origin:0 50%;">PlayerState</div>
<div class="t" style="left:713.5px;top:157.39000000000001px;font-size:5px;color:#8a8a8a;transform:scaleX(0.87);transform-origin:0 50%;">PlayerState</div>
<svg style="left:623.8px;top:165.06px" width="7" height="5"><path d="M0.3 2.5 Q3 -0.3 5.8 2.5 Q3 5.3 0.3 2.5Z" fill="#8ab0e0"/><circle cx="3" cy="2.5" r="1.2" fill="#2a3a5a"/></svg>
<svg style="left:639px;top:164.56px" width="8" height="6"><circle cx="3.6" cy="3" r="2.5" fill="url(#shs)"/></svg>
<div class="t" style="left:648px;top:163.86px;font-size:5px;color:#d8d8d8;transform:scaleX(0.85);transform-origin:0 50%;">Sky Sphere</div>
<div class="t" style="left:713.5px;top:163.86px;font-size:5px;color:#5f90d8;transform:scaleX(0.87);transform-origin:0 50%;text-decoration:underline;">Edit BP_Sky_Sphere</div>
<div class="a" style="left:623.5px;top:247px;width:139px;height:0.8px;background:#4e4e4e"></div>
<div class="t" style="left:626.2px;top:249.3px;font-size:5px;color:#cfcfcf;transform:scaleX(0.885);transform-origin:0 50%;">18 actors</div>
<svg style="left:725px;top:250.5px" width="7" height="5"><path d="M0.3 2.5 Q3 -0.3 5.8 2.5 Q3 5.3 0.3 2.5Z" fill="#8ab0e0"/><circle cx="3" cy="2.5" r="1.2" fill="#2a3a5a"/></svg>
<div class="t" style="left:732px;top:249.3px;font-size:5px;color:#c4c4c4;transform:scaleX(0.885);transform-origin:0 50%;">View Options</div>
<svg style="left:758.5px;top:252px" width="4" height="3"><polygon points="0.3,0.5 3.7,0.5 2,2.5" fill="#bbb"/></svg>
<div class="a" style="left:620px;top:258px;width:148px;height:11px;background:#262626"></div>
<div class="a" style="left:621.9px;top:261.9px;width:46px;height:7.2px;background:#333;border-radius:1px 1px 0 0"></div>
<div class="a" style="left:669.2px;top:261.9px;width:46.4px;height:7.2px;background:#4a4a4a;border-radius:1px 1px 0 0;border-top:0.7px solid #948040"></div>
<div class="a" style="left:716.2px;top:261.9px;width:48px;height:7.2px;background:#333;border-radius:1px 1px 0 0"></div>
<svg style="left:623.5px;top:262.5px" width="6" height="6"><circle cx="2.8" cy="2.8" r="2" fill="#8ab0e0" stroke="#2a4a8a" stroke-width="0.7"/><path d="M4 4 L5.5 5.5" stroke="#bbb" stroke-width="0.8"/></svg>
<div class="t" style="left:631px;top:261.6px;font-size:5px;color:#9a9a9a;transform:scaleX(0.916);transform-origin:0 50%;">Details</div>
<svg style="left:671px;top:262.5px" width="7" height="6"><circle cx="3.2" cy="3" r="2.5" fill="#7aa8e0"/><ellipse cx="3.2" cy="2.3" rx="2" ry="1" fill="#d8e8f8"/></svg>
<div class="t" style="left:678px;top:261.6px;font-size:5px;color:#bcbcbc;transform:scaleX(0.864);transform-origin:0 50%;">World Settings</div>
<svg style="left:719px;top:262.5px" width="6" height="6"><rect x="0.5" y="0.5" width="4.5" height="5" fill="#dfe8f8"/><path d="M1.5 2 L3 3 L1.5 4" stroke="#3a6ac8" stroke-width="0.8" fill="none"/></svg>
<div class="t" style="left:726px;top:261.6px;font-size:5px;color:#9a9a9a;transform:scaleX(0.889);transform-origin:0 50%;">Output Log</div>
<svg style="left:664px;top:263.5px" width="4" height="4"><path d="M0.7 0.7 L3.3 3.3 M3.3 0.7 L0.7 3.3" stroke="#555" stroke-width="0.5"/></svg>
<svg style="left:711px;top:263.5px" width="4" height="4"><path d="M0.7 0.7 L3.3 3.3 M3.3 0.7 L0.7 3.3" stroke="#555" stroke-width="0.5"/></svg>
<svg style="left:759px;top:263.5px" width="4" height="4"><path d="M0.7 0.7 L3.3 3.3 M3.3 0.7 L0.7 3.3" stroke="#555" stroke-width="0.5"/></svg>
<div class="a" style="left:620.5px;top:269px;width:146px;height:252px;background:#3a3a3a;border-left:1px solid #2a2a2a"></div>
<div class="a" style="left:622.9px;top:270.9px;width:117.5px;height:7px;background:#d2d2d2;border-radius:1px"></div>
<div class="t" style="left:624.5px;top:270.5px;font-size:5px;color:#a8a8a8;transform:scaleX(0.821);transform-origin:0 50%;">Search</div>
<svg style="left:733.5px;top:271px" width="7" height="7"><circle cx="4" cy="3.2" r="2" stroke="#222" stroke-width="0.8" fill="none"/><path d="M2.6 4.6 L1.2 6" stroke="#222" stroke-width="0.9"/></svg>
<div class="a" style="left:743px;top:270px;width:9px;height:9px;background:#5c5c5c;border:1px solid #6a6a6a"></div>
<div class="a" style="left:745px;top:272px;width:5px;height:5px;background:#8a8a8a"></div>
<svg style="left:755.5px;top:272.0px" width="7" height="5"><path d="M0.3 2.5 Q3 -0.3 5.8 2.5 Q3 5.3 0.3 2.5Z" fill="#8ab0e0"/><circle cx="3" cy="2.5" r="1.2" fill="#2a3a5a"/></svg>
<svg style="left:762px;top:273.5px" width="4" height="3"><polygon points="0.3,0.5 3.7,0.5 2,2.5" fill="#aaa"/></svg>
<div class="a" style="left:760.5px;top:280px;width:4px;height:241px;background:#2e2e2e"></div>
<div class="a" style="left:760.8px;top:280.5px;width:3.4px;height:151px;background:#d0d0d0;border-radius:1px"></div>
<div class="a" style="left:621.5px;top:280px;width:139px;height:6.800000000000011px;background:#2a2a2a"></div>
<svg style="left:623px;top:281.4px" width="4" height="4"><polygon points="3.2,0.5 3.2,3.2 0.5,3.2" fill="#ddd"/></svg>
<div class="t" style="left:626.5px;top:279.79999999999995px;font-size:5.3px;color:#dedede;transform:scaleX(0.784);transform-origin:0 50%;font-weight:bold">World</div>
<div class="a" style="left:669px;top:286.8px;width:0.7px;height:26.69999999999999px;background:#2f2f2f"></div>
<div class="t" style="left:626.8px;top:288.0px;font-size:5px;color:#c2c2c2;transform:scaleX(0.8);transform-origin:0 50%;">Enable World Composit</div>
<div class="a" style="left:671px;top:289.09999999999997px;width:5.2px;height:5.2px;background:#a6a6a6;border-radius:0.6px"></div>
<div class="t" style="left:626.8px;top:296.5px;font-size:5px;color:#c2c2c2;transform:scaleX(0.8);transform-origin:0 50%;">Use Client Side Level S</div>
<div class="a" style="left:671px;top:297.59999999999997px;width:5.2px;height:5.2px;background:#a6a6a6;border-radius:0.6px"></div>
<div class="t" style="left:626.8px;top:304.8px;font-size:5px;color:#c2c2c2;transform:scaleX(0.8);transform-origin:0 50%;">Kill Z</div>
<div class="a" style="left:671.1px;top:305.90000000000003px;width:38.7px;height:5.9px;background:#dcdcdc;border-radius:1px"></div>
<div class="t" style="left:672.8px;top:305.1px;font-size:5px;color:#4a4a4a;transform:scaleX(0.88);transform-origin:0 50%;">-1048575.0</div>
<svg style="left:704px;top:306.3px" width="5" height="5"><path d="M1 4 L4 1 M2.3 1 L4 1 L4 2.7 M1 2.3 L1 4 L2.7 4" stroke="#222" stroke-width="0.6" fill="none"/></svg>
<div class="a" style="left:621.5px;top:313.5px;width:139px;height:6.0px;background:#333"></div>
<svg style="left:687px;top:314.7px" width="6" height="4"><polygon points="0.5,0.5 5.5,0.5 3,3" fill="#e8e8e8"/></svg>
<div class="a" style="left:621.5px;top:320px;width:139px;height:6.800000000000011px;background:#2a2a2a"></div>
<svg style="left:623px;top:321.4px" width="4" height="4"><polygon points="3.2,0.5 3.2,3.2 0.5,3.2" fill="#ddd"/></svg>
<div class="t" style="left:626.5px;top:319.79999999999995px;font-size:5.3px;color:#dedede;transform:scaleX(0.816);transform-origin:0 50%;font-weight:bold">Game Mode</div>
<div class="a" style="left:669px;top:326.8px;width:0.7px;height:74.69999999999999px;background:#2f2f2f"></div>
<div class="t" style="left:626.8px;top:328.3px;font-size:5px;color:#c2c2c2;transform:scaleX(0.8);transform-origin:0 50%;">GameMode Override</div>
<div class="a" style="left:671.1px;top:329px;width:43.6px;height:6.2px;background:linear-gradient(#ececec,#bcbcbc);border-radius:1px"></div>
<div class="t" style="left:672.8px;top:328.3px;font-size:5px;color:#444;transform:scaleX(0.88);transform-origin:0 50%;">BPGameMode</div>
<svg style="left:710px;top:331px" width="4" height="3"><polygon points="0.3,0.3 3.7,0.3 2,2.3" fill="#222"/></svg>
<svg style="left:716.5px;top:329px" width="24" height="6"><polygon points="0.5,3 3,0.8 3,2.2 4.8,2.2 4.8,3.8 3,3.8 3,5.2" fill="#e4e4e4"/><circle cx="10" cy="2.6" r="1.7" stroke="#ddd" stroke-width="0.7" fill="none"/><path d="M8.9 3.8 L7.8 5" stroke="#ddd" stroke-width="0.7"/><path d="M16.3 0.8 L16.3 5.2 M14.1 3 L18.5 3" stroke="#e8e8e8" stroke-width="1.3"/><path d="M21 1.5 Q23 2 22 4" stroke="#d8c040" stroke-width="0.8" fill="none"/></svg>
<svg style="left:623px;top:338.6px" width="4" height="4"><polygon points="3.2,0.5 3.2,3.2 0.5,3.2" fill="#bbb"/></svg>
<div class="t" style="left:627px;top:336.90000000000003px;font-size:5px;color:#c2c2c2;transform:scaleX(0.8);transform-origin:0 50%;">Selected GameMode</div>
<div class="t" style="left:630.7px;top:345.7px;font-size:5px;color:#c2c2c2;transform:scaleX(0.8);transform-origin:0 50%;">Default Pawn Class</div>
<div class="a" style="left:671.1px;top:346.4px;width:43.6px;height:6.2px;background:linear-gradient(#ececec,#bcbcbc);border-radius:1px"></div>
<div class="t" style="left:672.8px;top:345.7px;font-size:5px;color:#444;transform:scaleX(0.88);transform-origin:0 50%;">DefaultPawn</div>
<svg style="left:710px;top:348.4px" width="4" height="3"><polygon points="0.3,0.3 3.7,0.3 2,2.3" fill="#222"/></svg>
<svg style="left:716.5px;top:346.4px" width="24" height="6"><polygon points="0.5,3 3,0.8 3,2.2 4.8,2.2 4.8,3.8 3,3.8 3,5.2" fill="#e4e4e4"/><circle cx="10" cy="2.6" r="1.7" stroke="#ddd" stroke-width="0.7" fill="none"/><path d="M8.9 3.8 L7.8 5" stroke="#ddd" stroke-width="0.7"/><path d="M16.3 0.8 L16.3 5.2 M14.1 3 L18.5 3" stroke="#e8e8e8" stroke-width="1.3"/></svg>
<div class="t" style="left:630.7px;top:355.2px;font-size:5px;color:#c2c2c2;transform:scaleX(0.8);transform-origin:0 50%;">HUD Class</div>
<div class="a" style="left:671.1px;top:355.9px;width:43.6px;height:6.2px;background:linear-gradient(#ececec,#bcbcbc);border-radius:1px"></div>
<div class="t" style="left:672.8px;top:355.2px;font-size:5px;color:#444;transform:scaleX(0.88);transform-origin:0 50%;">HUD</div>
<svg style="left:710px;top:357.9px" width="4" height="3"><polygon points="0.3,0.3 3.7,0.3 2,2.3" fill="#222"/></svg>
<svg style="left:716.5px;top:355.9px" width="24" height="6"><polygon points="0.5,3 3,0.8 3,2.2 4.8,2.2 4.8,3.8 3,3.8 3,5.2" fill="#e4e4e4"/><circle cx="10" cy="2.6" r="1.7" stroke="#ddd" stroke-width="0.7" fill="none"/><path d="M8.9 3.8 L7.8 5" stroke="#ddd" stroke-width="0.7"/><path d="M16.3 0.8 L16.3 5.2 M14.1 3 L18.5 3" stroke="#e8e8e8" stroke-width="1.3"/></svg>
<div class="t" style="left:630.7px;top:364.7px;font-size:5px;color:#c2c2c2;transform:scaleX(0.8);transform-origin:0 50%;">Player Controller Clas</div>
<div class="a" style="left:671.1px;top:365.4px;width:43.6px;height:6.2px;background:linear-gradient(#ececec,#bcbcbc);border-radius:1px"></div>
<div class="t" style="left:672.8px;top:364.7px;font-size:5px;color:#444;transform:scaleX(0.88);transform-origin:0 50%;">PlayerController</div>
<svg style="left:710px;top:367.4px" width="4" height="3"><polygon points="0.3,0.3 3.7,0.3 2,2.3" fill="#222"/></svg>
<svg style="left:716.5px;top:365.4px" width="24" height="6"><polygon points="0.5,3 3,0.8 3,2.2 4.8,2.2 4.8,3.8 3,3.8 3,5.2" fill="#e4e4e4"/><circle cx="10" cy="2.6" r="1.7" stroke="#ddd" stroke-width="0.7" fill="none"/><path d="M8.9 3.8 L7.8 5" stroke="#ddd" stroke-width="0.7"/><path d="M16.3 0.8 L16.3 5.2 M14.1 3 L18.5 3" stroke="#e8e8e8" stroke-width="1.3"/></svg>
<div class="t" style="left:630.7px;top:373.8px;font-size:5px;color:#c2c2c2;transform:scaleX(0.8);transform-origin:0 50%;">Game State Class</div>
<div class="a" style="left:671.1px;top:374.5px;width:43.6px;height:6.2px;background:linear-gradient(#ececec,#bcbcbc);border-radius:1px"></div>
<div class="t" style="left:672.8px;top:373.8px;font-size:5px;color:#444;transform:scaleX(0.88);transform-origin:0 50%;">GameStateBase</div>
<svg style="left:710px;top:376.5px" width="4" height="3"><polygon points="0.3,0.3 3.7,0.3 2,2.3" fill="#222"/></svg>
<svg style="left:716.5px;top:374.5px" width="24" height="6"><polygon points="0.5,3 3,0.8 3,2.2 4.8,2.2 4.8,3.8 3,3.8 3,5.2" fill="#e4e4e4"/><circle cx="10" cy="2.6" r="1.7" stroke="#ddd" stroke-width="0.7" fill="none"/><path d="M8.9 3.8 L7.8 5" stroke="#ddd" stroke-width="0.7"/><path d="M16.3 0.8 L16.3 5.2 M14.1 3 L18.5 3" stroke="#e8e8e8" stroke-width="1.3"/></svg>
<div class="t" style="left:630.7px;top:383.3px;font-size:5px;color:#c2c2c2;transform:scaleX(0.8);transform-origin:0 50%;">Player State Class</div>
<div class="a" style="left:671.1px;top:384px;width:43.6px;height:6.2px;background:linear-gradient(#ececec,#bcbcbc);border-radius:1px"></div>
<div class="t" style="left:672.8px;top:383.3px;font-size:5px;color:#444;transform:scaleX(0.88);transform-origin:0 50%;">PlayerState</div>
<svg style="left:710px;top:386px" width="4" height="3"><polygon points="0.3,0.3 3.7,0.3 2,2.3" fill="#222"/></svg>
<svg style="left:716.5px;top:384px" width="24" height="6"><polygon points="0.5,3 3,0.8 3,2.2 4.8,2.2 4.8,3.8 3,3.8 3,5.2" fill="#e4e4e4"/><circle cx="10" cy="2.6" r="1.7" stroke="#ddd" stroke-width="0.7" fill="none"/><path d="M8.9 3.8 L7.8 5" stroke="#ddd" stroke-width="0.7"/><path d="M16.3 0.8 L16.3 5.2 M14.1 3 L18.5 3" stroke="#e8e8e8" stroke-width="1.3"/></svg>
<div class="t" style="left:630.7px;top:392.5px;font-size:5px;color:#c2c2c2;transform:scaleX(0.8);transform-origin:0 50%;">Spectator Class</div>
<div class="a" style="left:671.1px;top:393.2px;width:43.6px;height:6.2px;background:linear-gradient(#ececec,#bcbcbc);border-radius:1px"></div>
<div class="t" style="left:672.8px;top:392.5px;font-size:5px;color:#444;transform:scaleX(0.88);transform-origin:0 50%;">SpectatorPawn</div>
<svg style="left:710px;top:395.2px" width="4" height="3"><polygon points="0.3,0.3 3.7,0.3 2,2.3" fill="#222"/></svg>
<svg style="left:716.5px;top:393.2px" width="24" height="6"><polygon points="0.5,3 3,0.8 3,2.2 4.8,2.2 4.8,3.8 3,3.8 3,5.2" fill="#e4e4e4"/><circle cx="10" cy="2.6" r="1.7" stroke="#ddd" stroke-width="0.7" fill="none"/><path d="M8.9 3.8 L7.8 5" stroke="#ddd" stroke-width="0.7"/><path d="M16.3 0.8 L16.3 5.2 M14.1 3 L18.5 3" stroke="#e8e8e8" stroke-width="1.3"/></svg>
<div class="a" style="left:621.5px;top:402px;width:139px;height:7.399999999999977px;background:#2a2a2a"></div>
<svg style="left:623px;top:403.7px" width="4" height="4"><polygon points="3.2,0.5 3.2,3.2 0.5,3.2" fill="#ddd"/></svg>
<div class="t" style="left:626.5px;top:402.09999999999997px;font-size:5.3px;color:#dedede;transform:scaleX(0.868);transform-origin:0 50%;font-weight:bold">Lightmass</div>
<svg style="left:623.5px;top:412.3px" width="3" height="4"><polygon points="0.3,0.3 2.5,2 0.3,3.7" fill="#bbb"/></svg>
<div class="t" style="left:627.2px;top:410.6px;font-size:5px;color:#c2c2c2;transform:scaleX(0.8);transform-origin:0 50%;">Lightmass Settings</div>
<div class="a" style="left:621.5px;top:418.5px;width:139px;height:3.5px;background:#333"></div>
<svg style="left:623.5px;top:423.8px" width="3" height="4"><polygon points="0.3,0.3 2.5,2 0.3,3.7" fill="#bbb"/></svg>
<div class="t" style="left:627.2px;top:422.1px;font-size:5px;color:#c2c2c2;transform:scaleX(0.8);transform-origin:0 50%;">Lightmaps</div>
<div class="t" style="left:671px;top:422.1px;font-size:5px;color:#c8c8c8;transform:scaleX(0.82);transform-origin:0 50%;">5 Lightmap(s)</div>
<div class="a" style="left:669px;top:409.4px;width:0.7px;height:9.100000000000023px;background:#2f2f2f"></div>
<div class="a" style="left:669px;top:422px;width:0.7px;height:24.5px;background:#2f2f2f"></div>
<div class="t" style="left:626.8px;top:429.7px;font-size:5px;color:#c2c2c2;transform:scaleX(0.8);transform-origin:0 50%;">Packed Light and Shad</div>
<div class="a" style="left:671.1px;top:430.5px;width:38.7px;height:5.9px;background:#dcdcdc;border-radius:1px"></div>
<div class="t" style="left:672.8px;top:429.7px;font-size:5px;color:#4a4a4a;transform:scaleX(0.88);transform-origin:0 50%;">1024</div>
<svg style="left:704px;top:430.9px" width="5" height="5"><path d="M1 4 L4 1 M2.3 1 L4 1 L4 2.7 M1 2.3 L1 4 L2.7 4" stroke="#222" stroke-width="0.6" fill="none"/></svg>
<div class="t" style="left:626.8px;top:438.3px;font-size:5px;color:#c2c2c2;transform:scaleX(0.8);transform-origin:0 50%;">Force No Precomputed</div>
<div class="a" style="left:671px;top:439.4px;width:5.2px;height:5.2px;background:#a6a6a6;border-radius:0.6px"></div>
<div class="a" style="left:621.5px;top:446.5px;width:139px;height:6.0px;background:#333"></div>
<svg style="left:687px;top:447.7px" width="6" height="4"><polygon points="0.5,3 5.5,3 3,0.5" fill="#e8e8e8"/></svg>
<div class="a" style="left:621.5px;top:453px;width:139px;height:6.800000000000011px;background:#2a2a2a"></div>
<svg style="left:623px;top:454.4px" width="4" height="4"><polygon points="3.2,0.5 3.2,3.2 0.5,3.2" fill="#ddd"/></svg>
<div class="t" style="left:626.5px;top:452.79999999999995px;font-size:5.3px;color:#dedede;transform:scaleX(0.874);transform-origin:0 50%;font-weight:bold">Physics</div>
<div class="a" style="left:669px;top:459.8px;width:0.7px;height:17.69999999999999px;background:#2f2f2f"></div>
<div class="t" style="left:626.8px;top:461.0px;font-size:5px;color:#c2c2c2;transform:scaleX(0.8);transform-origin:0 50%;">Override World Gravity</div>
<div class="a" style="left:671px;top:462.09999999999997px;width:5.2px;height:5.2px;background:#a6a6a6;border-radius:0.6px"></div>
<div class="t" style="left:626.8px;top:469.5px;font-size:5px;color:#707070;transform:scaleX(0.8);transform-origin:0 50%;">Global Gravity Z</div>
<div class="a" style="left:671.1px;top:470.5px;width:38.7px;height:5.9px;background:#777;border-radius:1px"></div>
<div class="t" style="left:672.8px;top:469.7px;font-size:5px;color:#5a5a5a;transform:scaleX(0.88);transform-origin:0 50%;">0.0</div>
<svg style="left:704px;top:470.9px" width="5" height="5"><path d="M1 4 L4 1 M2.3 1 L4 1 L4 2.7 M1 2.3 L1 4 L2.7 4" stroke="#555" stroke-width="0.6" fill="none"/></svg>
<div class="a" style="left:621.5px;top:477.5px;width:139px;height:6.0px;background:#333"></div>
<svg style="left:687px;top:478.7px" width="6" height="4"><polygon points="0.5,0.5 5.5,0.5 3,3" fill="#e8e8e8"/></svg>
<div class="a" style="left:621.5px;top:485.2px;width:139px;height:6.800000000000011px;background:#2a2a2a"></div>
<svg style="left:623px;top:486.6px" width="4" height="4"><polygon points="3.2,0.5 3.2,3.2 0.5,3.2" fill="#ddd"/></svg>
<div class="t" style="left:626.5px;top:485.0px;font-size:5.3px;color:#dedede;transform:scaleX(0.897);transform-origin:0 50%;font-weight:bold">Rendering</div>
<div class="a" style="left:669px;top:492px;width:0.7px;height:26px;background:#2f2f2f"></div>
<div class="t" style="left:626.8px;top:492.6px;font-size:5px;color:#c2c2c2;transform:scaleX(0.8);transform-origin:0 50%;">Default Max DistanceFi</div>
<div class="a" style="left:671.1px;top:493.70000000000005px;width:38.7px;height:5.9px;background:#dcdcdc;border-radius:1px"></div>
<div class="t" style="left:672.8px;top:492.90000000000003px;font-size:5px;color:#4a4a4a;transform:scaleX(0.88);transform-origin:0 50%;">600.0</div>
<svg style="left:704px;top:494.1px" width="5" height="5"><path d="M1 4 L4 1 M2.3 1 L4 1 L4 2.7 M1 2.3 L1 4 L2.7 4" stroke="#222" stroke-width="0.6" fill="none"/></svg>
<div class="t" style="left:626.8px;top:501.3px;font-size:5px;color:#c2c2c2;transform:scaleX(0.8);transform-origin:0 50%;">Global DistanceField Vi</div>
<div class="a" style="left:671.1px;top:502.40000000000003px;width:38.7px;height:5.9px;background:#dcdcdc;border-radius:1px"></div>
<div class="t" style="left:672.8px;top:501.6px;font-size:5px;color:#4a4a4a;transform:scaleX(0.88);transform-origin:0 50%;">20000.0</div>
<svg style="left:704px;top:502.8px" width="5" height="5"><path d="M1 4 L4 1 M2.3 1 L4 1 L4 2.7 M1 2.3 L1 4 L2.7 4" stroke="#222" stroke-width="0.6" fill="none"/></svg>
<div class="t" style="left:626.8px;top:509.9px;font-size:5px;color:#c2c2c2;transform:scaleX(0.8);transform-origin:0 50%;">Dynamic Indirect Shad</div>
<div class="a" style="left:671.1px;top:511.0px;width:38.7px;height:5.9px;background:#dcdcdc;border-radius:1px"></div>
<div class="a" style="left:701px;top:511.0px;width:8.8px;height:5.9px;background:#4a4a4a;border-radius:0 1px 1px 0"></div>
<div class="t" style="left:672.8px;top:510.19999999999993px;font-size:5px;color:#4a4a4a;transform:scaleX(0.88);transform-origin:0 50%;">0.8</div>
<svg style="left:704px;top:511.4px" width="5" height="5"><path d="M1 4 L4 1 M2.3 1 L4 1 L4 2.7 M1 2.3 L1 4 L2.7 4" stroke="#222" stroke-width="0.6" fill="none"/></svg>
<div class="a" style="left:621.5px;top:518px;width:139px;height:3px;background:#2a2a2a"></div>
<div class="a" style="left:0px;top:368.5px;width:620px;height:3px;background:#1a1a1a"></div>
<div class="a" style="left:3.3px;top:371.2px;width:53.6px;height:6.8px;background:#444;border-radius:1px 1px 0 0"></div>
<svg style="left:5px;top:372px" width="6" height="6"><rect x="0.3" y="0.3" width="5" height="4.8" fill="#5a80d0"/><rect x="1" y="1" width="3.6" height="1.2" fill="#c8d8f0"/><rect x="1" y="2.8" width="3.6" height="1.2" fill="#a8c0e8"/></svg>
<div class="t" style="left:12.4px;top:371px;font-size:5px;color:#9c9c9c;transform:scaleX(0.857);transform-origin:0 50%;">Content Browser</div>
<svg style="left:50px;top:373px" width="5" height="5"><path d="M1 1 L4 4 M4 1 L1 4" stroke="#555" stroke-width="0.6"/></svg>
<div class="a" style="left:2px;top:378px;width:617px;height:143px;background:#3e3e3e;border-left:1px solid #2a2a2a;border-right:1px solid #2a2a2a"></div>
<div class="a" style="left:3px;top:378px;width:615px;height:13px;background:#3a3a3a"></div>
<div class="a" style="left:3.9px;top:380px;width:38px;height:9.7px;background:#3aa64a;border-radius:1px"></div>
<svg style="left:7px;top:381.5px" width="5" height="7"><path d="M0.3 0.3 L2.8 0.3 L4.3 1.8 L4.3 6 L0.3 6 Z" fill="#f4f4f4"/></svg>
<div class="t" style="left:13px;top:381px;font-size:5.5px;color:#f2f2f2;transform:scaleX(0.893);transform-origin:0 50%;font-weight:bold">Add New</div>
<svg style="left:35.5px;top:384px" width="4" height="3"><polygon points="0.3,0.5 3.7,0.5 2,2.5" fill="#eee"/></svg>
<svg style="left:46.5px;top:381.5px" width="6" height="6"><path d="M2.8 0.5 L2.8 3.5 M1.3 2.2 L2.8 3.7 L4.3 2.2" stroke="#ddd" stroke-width="0.9" fill="none"/><rect x="0.3" y="4.3" width="5" height="1" fill="#ddd"/></svg>
<div class="t" style="left:54px;top:381px;font-size:5.5px;color:#dcdcdc;transform:scaleX(0.877);transform-origin:0 50%;font-weight:bold">Import</div>
<svg style="left:76.5px;top:381.5px" width="6" height="6"><rect x="0.5" y="0.5" width="4.5" height="4.8" fill="none" stroke="#ccc" stroke-width="0.8"/><rect x="1.7" y="0.5" width="2.2" height="1.5" fill="#ccc"/></svg>
<div class="t" style="left:84px;top:381px;font-size:5.5px;color:#dcdcdc;transform:scaleX(0.896);transform-origin:0 50%;font-weight:bold">Save All</div>
<div class="a" style="left:108.3px;top:380px;width:0.8px;height:10px;background:#2c2c2c"></div>
<svg style="left:111.5px;top:382px" width="13" height="5"><path d="M5 2.5 L1 2.5 M2.6 0.8 L0.9 2.5 L2.6 4.2" stroke="#e0e0e0" stroke-width="1" fill="none"/><path d="M8 2.5 L12 2.5 M10.4 0.8 L12.1 2.5 L10.4 4.2" stroke="#777" stroke-width="1" fill="none"/></svg>
<div class="a" style="left:126.2px;top:380px;width:0.8px;height:10px;background:#2c2c2c"></div>
<svg style="left:129.5px;top:382.1px" width="7" height="5"><path d="M0.3 0.6 L2.5 0.6 L3.2 1.3 L5.5 1.3 L5.5 4.6 L0.3 4.6 Z" fill="#e8e8e8"/></svg>
<div class="t" style="left:139px;top:381px;font-size:5.5px;color:#dcdcdc;transform:scaleX(0.881);transform-origin:0 50%;font-weight:bold">Content</div>
<svg style="left:162.5px;top:383px" width="3" height="4"><polygon points="0.3,0.3 2.5,2 0.3,3.7" fill="#ddd"/></svg>
<div class="t" style="left:169.8px;top:381px;font-size:5.5px;color:#dcdcdc;transform:scaleX(0.889);transform-origin:0 50%;font-weight:bold">Maps</div>
<svg style="left:188px;top:383px" width="3" height="4"><polygon points="0.3,0.3 2.5,2 0.3,3.7" fill="#ddd"/></svg>
<svg style="left:611px;top:381px" width="7" height="7"><rect x="2.5" y="2.5" width="4" height="3.5" fill="#ccc"/><path d="M1 3 L1 1.5 Q2.2 0 3.4 1.5" stroke="#ccc" stroke-width="0.7" fill="none"/></svg>
<svg style="left:4.5px;top:393px" width="7" height="6"><g fill="#ddd"><rect x="2.5" y="0.3" width="4" height="0.9"/><rect x="2.5" y="2.3" width="4" height="0.9"/><rect x="2.5" y="4.3" width="4" height="0.9"/></g><polygon points="0.2,2.7 2,1.2 2,4.2" fill="#ddd"/></svg>
<div class="a" style="left:12.4px;top:392px;width:142.6px;height:7.2px;background:#d2d2d2;border-radius:1px"></div>
<div class="t" style="left:14px;top:391.8px;font-size:5px;color:#a8a8a8;transform:scaleX(0.855);transform-origin:0 50%;">Search Folders</div>
<svg style="left:147.5px;top:392.3px" width="7" height="7"><circle cx="4" cy="3.2" r="2" stroke="#222" stroke-width="0.8" fill="none"/><path d="M2.6 4.6 L1.2 6" stroke="#222" stroke-width="0.9"/></svg>
<div class="a" style="left:155.8px;top:390.7px;width:2px;height:128.8px;background:#535353"></div>
<svg style="left:3.5px;top:402.5px" width="3" height="3"><polygon points="2.5,0.3 2.5,2.5 0.3,2.5" fill="#ccc"/></svg>
<svg style="left:7.7px;top:402.4px" width="7" height="5"><path d="M0.3 0.6 L2.5 0.6 L3.2 1.3 L5.5 1.3 L5.5 4.6 L0.3 4.6 Z" fill="#e4e4e4"/></svg>
<div class="t" style="left:14.3px;top:401.1px;font-size:6.6px;color:#d8d8d8;transform:scaleX(0.857);transform-origin:0 50%;">Content</div>
<svg style="left:11px;top:408.5px" width="7" height="5"><path d="M0.3 0.6 L2.5 0.6 L3.2 1.3 L5.5 1.3 L5.5 4.6 L0.3 4.6 Z" fill="#e0e0e0"/></svg>
<div class="t" style="left:18px;top:407.3px;font-size:5.2px;color:#cfcfcf;transform:scaleX(0.891);transform-origin:0 50%;">Blueprints</div>
<svg style="left:7px;top:414.94px" width="4" height="4"><polygon points="0.8,0.5 3.2,1.8 0.8,3.1" fill="none" stroke="#999" stroke-width="0.5"/></svg>
<svg style="left:11px;top:414.24px" width="7" height="5"><path d="M0.3 0.6 L2.5 0.6 L3.2 1.3 L5.5 1.3 L5.5 4.6 L0.3 4.6 Z" fill="#e0e0e0"/></svg>
<div class="t" style="left:18px;top:413.04px;font-size:5.2px;color:#cfcfcf;transform:scaleX(0.903);transform-origin:0 50%;">FirstPerson</div>
<svg style="left:7px;top:420.68px" width="4" height="4"><polygon points="0.8,0.5 3.2,1.8 0.8,3.1" fill="none" stroke="#999" stroke-width="0.5"/></svg>
<svg style="left:11px;top:419.98px" width="7" height="5"><path d="M0.3 0.6 L2.5 0.6 L3.2 1.3 L5.5 1.3 L5.5 4.6 L0.3 4.6 Z" fill="#e0e0e0"/></svg>
<div class="t" style="left:18px;top:418.78000000000003px;font-size:5.2px;color:#cfcfcf;transform:scaleX(0.880);transform-origin:0 50%;">FirstPersonCPP</div>
<svg style="left:11px;top:425.72px" width="7" height="5"><path d="M0.3 0.6 L2.5 0.6 L3.2 1.3 L5.5 1.3 L5.5 4.6 L0.3 4.6 Z" fill="#e0e0e0"/></svg>
<div class="t" style="left:18px;top:424.52000000000004px;font-size:5.2px;color:#cfcfcf;transform:scaleX(0.846);transform-origin:0 50%;">Fonts</div>
<svg style="left:7px;top:432.15999999999997px" width="4" height="4"><polygon points="0.8,0.5 3.2,1.8 0.8,3.1" fill="none" stroke="#999" stroke-width="0.5"/></svg>
<svg style="left:11px;top:431.46px" width="7" height="5"><path d="M0.3 0.6 L2.5 0.6 L3.2 1.3 L5.5 1.3 L5.5 4.6 L0.3 4.6 Z" fill="#e0e0e0"/></svg>
<div class="t" style="left:18px;top:430.26px;font-size:5.2px;color:#cfcfcf;transform:scaleX(0.876);transform-origin:0 50%;">Geometry</div>
<svg style="left:7px;top:437.9px" width="4" height="4"><polygon points="0.8,0.5 3.2,1.8 0.8,3.1" fill="none" stroke="#999" stroke-width="0.5"/></svg>
<svg style="left:11px;top:437.2px" width="7" height="5"><path d="M0.3 0.6 L2.5 0.6 L3.2 1.3 L5.5 1.3 L5.5 4.6 L0.3 4.6 Z" fill="#e0e0e0"/></svg>
<div class="t" style="left:18px;top:436.0px;font-size:5.2px;color:#cfcfcf;transform:scaleX(0.910);transform-origin:0 50%;">Localization</div>
<div class="a" style="left:3.5px;top:442.74px;width:151.5px;height:5.4px;background:#8c8c8c"></div>
<svg style="left:11px;top:442.94px" width="7" height="5"><path d="M0.3 0.6 L2.5 0.6 L3.2 1.3 L5.5 1.3 L5.5 4.6 L0.3 4.6 Z" fill="#d8d8d8"/></svg>
<div class="t" style="left:18px;top:441.74px;font-size:5.2px;color:#3a3a3a;transform:scaleX(0.865);transform-origin:0 50%;">Maps</div>
<svg style="left:7px;top:449.38px" width="4" height="4"><polygon points="0.8,0.5 3.2,1.8 0.8,3.1" fill="none" stroke="#999" stroke-width="0.5"/></svg>
<svg style="left:11px;top:448.68px" width="7" height="5"><path d="M0.3 0.6 L2.5 0.6 L3.2 1.3 L5.5 1.3 L5.5 4.6 L0.3 4.6 Z" fill="#e0e0e0"/></svg>
<div class="t" style="left:18px;top:447.48px;font-size:5.2px;color:#cfcfcf;transform:scaleX(0.887);transform-origin:0 50%;">StarterContent</div>
<svg style="left:7px;top:455.12px" width="4" height="4"><polygon points="0.8,0.5 3.2,1.8 0.8,3.1" fill="none" stroke="#999" stroke-width="0.5"/></svg>
<svg style="left:11px;top:454.42px" width="7" height="5"><path d="M0.3 0.6 L2.5 0.6 L3.2 1.3 L5.5 1.3 L5.5 4.6 L0.3 4.6 Z" fill="#e0e0e0"/></svg>
<div class="t" style="left:18px;top:453.22px;font-size:5.2px;color:#cfcfcf;transform:scaleX(0.912);transform-origin:0 50%;">uiresources</div>
<svg style="left:3px;top:462.5px" width="3" height="4"><polygon points="0.3,0.3 2.5,2 0.3,3.7" fill="none" stroke="#999" stroke-width="0.5"/></svg>
<svg style="left:7px;top:461.8px" width="7" height="6"><path d="M0.3 0.6 L2.5 0.6 L3.2 1.3 L6 1.3 L6 5 L0.3 5 Z" fill="#ddd"/><rect x="1.5" y="2.2" width="3.5" height="1.8" fill="#777"/></svg>
<div class="t" style="left:14.5px;top:460.6px;font-size:6.6px;color:#d8d8d8;transform:scaleX(0.807);transform-origin:0 50%;">C++ Classes</div>
<svg style="left:160px;top:392.5px" width="4" height="5"><polygon points="0.3,0.5 3.7,0.5 2.4,2.2 2.4,4.5 1.6,4 1.6,2.2" fill="#ddd"/></svg>
<div class="t" style="left:164.5px;top:391.8px;font-size:5.2px;color:#dcdcdc;transform:scaleX(0.788);transform-origin:0 50%;font-weight:bold">Filters</div>
<svg style="left:178.5px;top:394.5px" width="4" height="3"><polygon points="0.3,0.5 3.7,0.5 2,2.5" fill="#ddd"/></svg>
<div class="a" style="left:185px;top:392px;width:424.6px;height:7.2px;background:#d2d2d2;border-radius:1px"></div>
<div class="t" style="left:187px;top:391.8px;font-size:5px;color:#a8a8a8;transform:scaleX(0.815);transform-origin:0 50%;">Search Maps</div>
<svg style="left:603px;top:392.3px" width="7" height="7"><circle cx="4" cy="3.2" r="2" stroke="#222" stroke-width="0.8" fill="none"/><path d="M2.6 4.6 L1.2 6" stroke="#222" stroke-width="0.9"/></svg>
<svg style="left:611.5px;top:393px" width="6" height="6"><rect x="0.5" y="0.5" width="4.5" height="4.5" fill="none" stroke="#666" stroke-width="0.7"/></svg>
<div class="a" style="left:160.5px;top:401.25px;width:53.2px;height:51.6px;background:radial-gradient(ellipse at 50% 45%,#5e4218,#513814)"></div>
<div class="a" style="left:160.5px;top:452.8px;width:53.2px;height:2.2px;background:#f09a10"></div>
<svg style="left:175.3px;top:418px" width="24" height="22"><polygon points="0.8,9.4 17.2,5.5 22.7,14 7.8,19.8" fill="#dcdcdc"/><polygon points="0.8,9.4 7.8,19.8 7.8,21.5 0.8,11" fill="#9a9a9a"/><polygon points="7.8,19.8 22.7,14 22.7,15.6 7.8,21.5" fill="#b8b8b8"/><polygon points="3,10 11,8 15,12 7,14" fill="#a8a8a8"/><polygon points="17.2,0 21.9,10.9 12.5,10.9" fill="#f2f2f2"/><polygon points="17.2,0 17.5,10.9 12.5,10.9" fill="#c8c8c8"/><polygon points="2.3,2.3 4.7,8.6 0.8,8.6" fill="#e8e8e8"/><polygon points="11.7,0.8 13.3,8.6 9.4,8.6" fill="#e4e4e4"/></svg>
<div class="t" style="left:174.29999999999998px;top:458.7px;font-size:5px;color:#d4d4d4;transform:scaleX(0.884);transform-origin:0 50%;">ExampleMap</div>
<div class="a" style="left:216.7px;top:401.25px;width:53.2px;height:51.6px;background:radial-gradient(ellipse at 50% 45%,#5e4218,#513814)"></div>
<div class="a" style="left:216.7px;top:452.8px;width:53.2px;height:2.2px;background:#f09a10"></div>
<svg style="left:231.5px;top:418px" width="24" height="22"><polygon points="0.8,9.4 17.2,5.5 22.7,14 7.8,19.8" fill="#dcdcdc"/><polygon points="0.8,9.4 7.8,19.8 7.8,21.5 0.8,11" fill="#9a9a9a"/><polygon points="7.8,19.8 22.7,14 22.7,15.6 7.8,21.5" fill="#b8b8b8"/><polygon points="3,10 11,8 15,12 7,14" fill="#a8a8a8"/><polygon points="17.2,0 21.9,10.9 12.5,10.9" fill="#f2f2f2"/><polygon points="17.2,0 17.5,10.9 12.5,10.9" fill="#c8c8c8"/><polygon points="2.3,2.3 4.7,8.6 0.8,8.6" fill="#e8e8e8"/><polygon points="11.7,0.8 13.3,8.6 9.4,8.6" fill="#e4e4e4"/></svg>
<div class="t" style="left:226.89999999999998px;top:458.7px;font-size:5px;color:#d4d4d4;transform:scaleX(0.913);transform-origin:0 50%;">LocalizationMap</div>
<div class="a" style="left:272px;top:400.2px;width:56.3px;height:68.2px;background:#8a8a8a"></div>
<div class="a" style="left:273.5px;top:401.5px;width:53.5px;height:51.5px;background:radial-gradient(ellipse at 50% 45%,#7a5a30,#6a4c26)"></div>
<div class="a" style="left:273.5px;top:452.8px;width:53.5px;height:2.2px;background:#f09a10"></div>
<svg style="left:288.3px;top:418px" width="24" height="22"><polygon points="0.8,9.4 17.2,5.5 22.7,14 7.8,19.8" fill="#dcdcdc"/><polygon points="0.8,9.4 7.8,19.8 7.8,21.5 0.8,11" fill="#9a9a9a"/><polygon points="7.8,19.8 22.7,14 22.7,15.6 7.8,21.5" fill="#b8b8b8"/><polygon points="3,10 11,8 15,12 7,14" fill="#a8a8a8"/><polygon points="17.2,0 21.9,10.9 12.5,10.9" fill="#f2f2f2"/><polygon points="17.2,0 17.5,10.9 12.5,10.9" fill="#c8c8c8"/><polygon points="2.3,2.3 4.7,8.6 0.8,8.6" fill="#e8e8e8"/><polygon points="11.7,0.8 13.3,8.6 9.4,8.6" fill="#e4e4e4"/></svg>
<div class="t" style="left:292.2px;top:458.7px;font-size:5px;color:#2a2a2a;transform:scaleX(0.811);transform-origin:0 50%;">NewMap</div>
<div class="a" style="left:329.8px;top:401.25px;width:53.2px;height:51.6px;background:radial-gradient(ellipse at 50% 45%,#5e4218,#513814)"></div>
<div class="a" style="left:329.8px;top:452.8px;width:53.2px;height:2.2px;background:#f09a10"></div>
<svg style="left:344.6px;top:418px" width="24" height="22"><polygon points="0.8,9.4 17.2,5.5 22.7,14 7.8,19.8" fill="#dcdcdc"/><polygon points="0.8,9.4 7.8,19.8 7.8,21.5 0.8,11" fill="#9a9a9a"/><polygon points="7.8,19.8 22.7,14 22.7,15.6 7.8,21.5" fill="#b8b8b8"/><polygon points="3,10 11,8 15,12 7,14" fill="#a8a8a8"/><polygon points="17.2,0 21.9,10.9 12.5,10.9" fill="#f2f2f2"/><polygon points="17.2,0 17.5,10.9 12.5,10.9" fill="#c8c8c8"/><polygon points="2.3,2.3 4.7,8.6 0.8,8.6" fill="#e8e8e8"/><polygon points="11.7,0.8 13.3,8.6 9.4,8.6" fill="#e4e4e4"/></svg>
<div class="t" style="left:347.25px;top:458.7px;font-size:5px;color:#d4d4d4;transform:scaleX(0.865);transform-origin:0 50%;">UMGMap</div>
<svg style="left:275px;top:446.5px" width="6" height="6"><circle cx="3" cy="3" r="2.5" fill="#ddd"/><polygon points="3,1 4.5,4 1.5,4" fill="#666"/></svg>
<div class="t" style="left:162px;top:509.70000000000005px;font-size:5px;color:#c8c8c8;transform:scaleX(0.883);transform-origin:0 50%;">4 items (1 selected)</div>
<svg style="left:580px;top:510.79999999999995px" width="7" height="5"><path d="M0.3 2.5 Q3 -0.3 5.8 2.5 Q3 5.3 0.3 2.5Z" fill="#8ab0e0"/><circle cx="3" cy="2.5" r="1.2" fill="#2a3a5a"/></svg>
<div class="t" style="left:587.5px;top:509.70000000000005px;font-size:5px;color:#c4c4c4;transform:scaleX(0.851);transform-origin:0 50%;">View Options</div>
<svg style="left:613.5px;top:512.5px" width="4" height="3"><polygon points="0.3,0.5 3.7,0.5 2,2.5" fill="#bbb"/></svg>
</body></html>
